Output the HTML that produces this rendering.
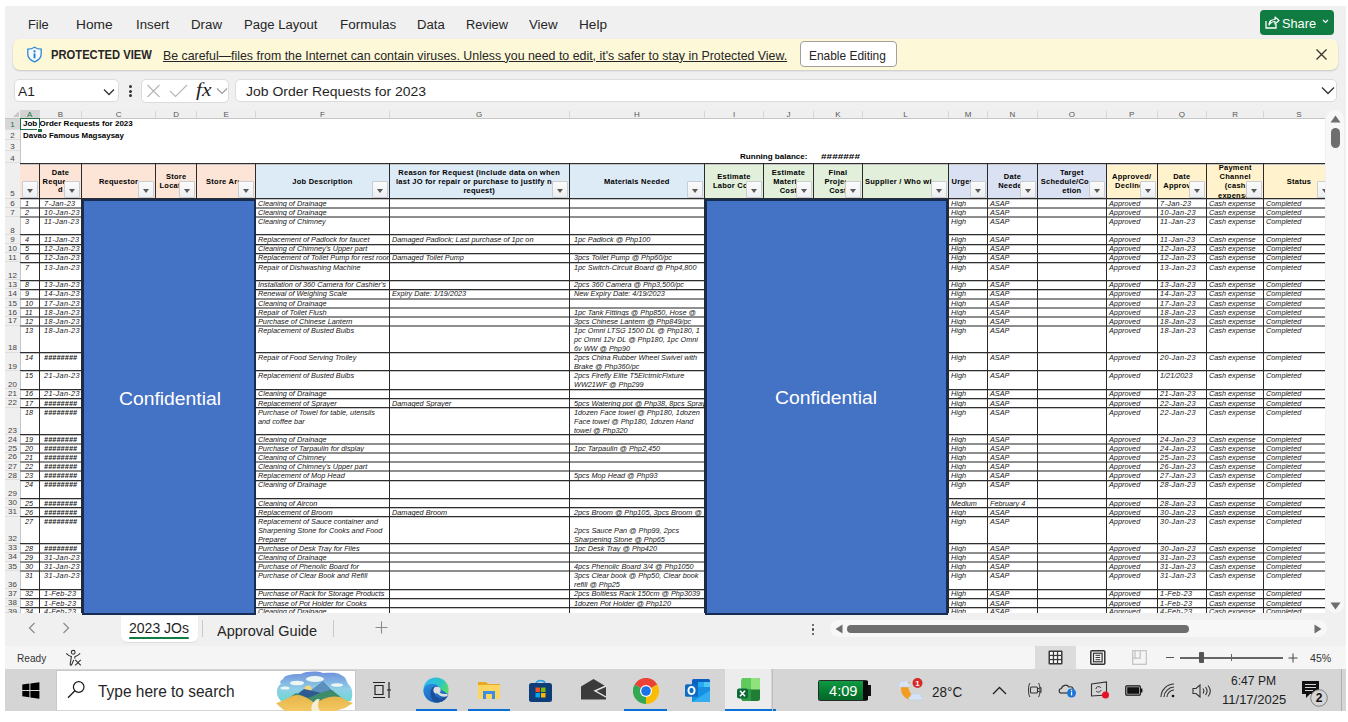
<!DOCTYPE html><html><head><meta charset="utf-8"><style>
*{margin:0;padding:0;box-sizing:border-box}
html,body{width:1348px;height:722px;overflow:hidden;background:#fff;font-family:"Liberation Sans",sans-serif;color:#1f1f1f}
.a{position:absolute}
.fb{position:absolute;width:16px;height:17px;background:linear-gradient(#fbfbfb,#eceef1);border:1px solid #c9ccd1;border-radius:1px}
.fb:after{content:"";position:absolute;left:4px;top:7px;border-left:3.5px solid transparent;border-right:3.5px solid transparent;border-top:4px solid #5a5a5a}
</style></head><body>
<div class="a" style="left:5px;top:6px;width:1341px;height:705px;background:#f0f0f0"></div>

<div style="position:absolute;left:27.5px;top:17.00px;line-height:normal;white-space:nowrap;font-size:13.7px;color:#262626;transform:scaleX(0.9382);transform-origin:0 0;">File</div>
<div style="position:absolute;left:76.4px;top:17.00px;line-height:normal;white-space:nowrap;font-size:13.7px;color:#262626;transform:scaleX(1.0023);transform-origin:0 0;">Home</div>
<div style="position:absolute;left:135.9px;top:17.00px;line-height:normal;white-space:nowrap;font-size:13.7px;color:#262626;transform:scaleX(0.9669);transform-origin:0 0;">Insert</div>
<div style="position:absolute;left:191px;top:17.00px;line-height:normal;white-space:nowrap;font-size:13.7px;color:#262626;transform:scaleX(0.9702);transform-origin:0 0;">Draw</div>
<div style="position:absolute;left:244px;top:17.00px;line-height:normal;white-space:nowrap;font-size:13.7px;color:#262626;transform:scaleX(0.9561);transform-origin:0 0;">Page Layout</div>
<div style="position:absolute;left:340.2px;top:17.00px;line-height:normal;white-space:nowrap;font-size:13.7px;color:#262626;transform:scaleX(0.9852);transform-origin:0 0;">Formulas</div>
<div style="position:absolute;left:416.9px;top:17.00px;line-height:normal;white-space:nowrap;font-size:13.7px;color:#262626;transform:scaleX(0.9578);transform-origin:0 0;">Data</div>
<div style="position:absolute;left:466px;top:17.00px;line-height:normal;white-space:nowrap;font-size:13.7px;color:#262626;transform:scaleX(0.9356);transform-origin:0 0;">Review</div>
<div style="position:absolute;left:529.4px;top:17.00px;line-height:normal;white-space:nowrap;font-size:13.7px;color:#262626;transform:scaleX(0.9687);transform-origin:0 0;">View</div>
<div style="position:absolute;left:579.2px;top:17.00px;line-height:normal;white-space:nowrap;font-size:13.7px;color:#262626;transform:scaleX(0.9945);transform-origin:0 0;">Help</div>
<div class="a" style="left:1260px;top:10px;width:73.5px;height:25px;background:#107c41;border-radius:4px"></div>
<svg class="a" style="left:1264px;top:15px" width="16" height="15" viewBox="0 0 16 15"><path d="M2 6 V13 H12 V9" fill="none" stroke="#fff" stroke-width="1.3"/><path d="M5 10 C5 6 8 4.5 11 4.5 V2 L15 5.5 L11 9 V6.5 C8.5 6.5 6.5 7.5 5 10Z" fill="none" stroke="#fff" stroke-width="1.2" stroke-linejoin="round"/></svg>
<div style="position:absolute;left:1282px;top:16.25px;line-height:normal;white-space:nowrap;font-size:13.2px;color:#fff;transform:scaleX(0.9658);transform-origin:0 0;">Share</div>
<svg class="a" style="left:1322px;top:19px" width="7" height="5" viewBox="0 0 7 5"><path d="M1 1 L3.5 3.5 L6 1" fill="none" stroke="#fff" stroke-width="1.2"/></svg>
<div class="a" style="left:12.5px;top:38.7px;width:1325px;height:31.5px;background:#fdf8d7;border-radius:7px;box-shadow:0 1px 2px rgba(0,0,0,0.18)"></div>
<svg class="a" style="left:26px;top:46px" width="17" height="17" viewBox="0 0 17 17"><path d="M8.5 1.2 C6 2.8 4 3.2 1.8 3.2 V8 C1.8 11.8 4.5 14.3 8.5 15.8 C12.5 14.3 15.2 11.8 15.2 8 V3.2 C13 3.2 11 2.8 8.5 1.2Z" fill="#f8f9fb" stroke="#2a8ad8" stroke-width="1.3"/><circle cx="8.5" cy="5.4" r="1.15" fill="#1a7fd0"/><path d="M8.5 7.4 V12.3" stroke="#1a7fd0" stroke-width="1.9"/></svg>
<div style="position:absolute;left:51.4px;top:47.37px;line-height:normal;white-space:nowrap;font-size:13.4px;font-weight:bold;color:#262626;transform:scaleX(0.8371);transform-origin:0 0;">PROTECTED VIEW</div>
<div style="position:absolute;left:162.8px;top:47.55px;line-height:normal;white-space:nowrap;font-size:13.2px;color:#262626;text-decoration:underline;transform:scaleX(0.9377);transform-origin:0 0;">Be careful—files from the Internet can contain viruses. Unless you need to edit, it&#x27;s safer to stay in Protected View.</div>
<div class="a" style="left:799.6px;top:40.8px;width:97.7px;height:26.7px;background:#fff;border:1px solid #a0a0a0;border-radius:4px"></div>
<div style="position:absolute;left:809px;top:47.55px;line-height:normal;white-space:nowrap;font-size:13.2px;color:#262626;transform:scaleX(0.9040);transform-origin:0 0;">Enable Editing</div>
<svg class="a" style="left:1315px;top:48px" width="13" height="13" viewBox="0 0 13 13"><path d="M1.5 1.5 L11.5 11.5 M11.5 1.5 L1.5 11.5" stroke="#333" stroke-width="1.3"/></svg>
<div class="a" style="left:14px;top:78.8px;width:105px;height:23.5px;background:#fff;border:1px solid #dcdcdc;border-radius:5px"></div>
<div style="position:absolute;left:17.8px;top:83.75px;line-height:normal;white-space:nowrap;font-size:13.2px;color:#1f1f1f;transform:scaleX(1.0470);transform-origin:0 0;">A1</div>
<svg class="a" style="left:103px;top:88px" width="12" height="8" viewBox="0 0 12 8"><path d="M1 1.5 L6 6.5 L11 1.5" fill="none" stroke="#333" stroke-width="1.3"/></svg>
<div class="a" style="left:128.5px;top:85px;width:3px;height:3px;border-radius:2px;background:#333"></div>
<div class="a" style="left:128.5px;top:89.5px;width:3px;height:3px;border-radius:2px;background:#333"></div>
<div class="a" style="left:128.5px;top:94px;width:3px;height:3px;border-radius:2px;background:#333"></div>
<div class="a" style="left:140.6px;top:78.8px;width:88.4px;height:24px;background:#fff;border:1px solid #dcdcdc;border-radius:5px"></div>
<svg class="a" style="left:146px;top:84px" width="15" height="14" viewBox="0 0 15 14"><path d="M1.5 1 L13.5 13 M13.5 1 L1.5 13" stroke="#b8b8b8" stroke-width="1.2"/></svg>
<svg class="a" style="left:169px;top:84px" width="19" height="14" viewBox="0 0 19 14"><path d="M1 7 L6.5 12.5 L18 1" fill="none" stroke="#b8b8b8" stroke-width="1.2"/></svg>
<div style="position:absolute;left:196px;top:80.01px;line-height:normal;white-space:nowrap;font-size:18px;font-family:Liberation Serif,serif;font-style:italic;color:#222;transform:scaleX(1.1923);transform-origin:0 0;">fx</div>
<svg class="a" style="left:216px;top:87px" width="12" height="8" viewBox="0 0 12 8"><path d="M1 1.5 L6 6.5 L11 1.5" fill="none" stroke="#999" stroke-width="1.1"/></svg>
<div class="a" style="left:234.7px;top:78.6px;width:1102.3px;height:23.5px;background:#fff;border:1px solid #dcdcdc;border-radius:5px"></div>
<div style="position:absolute;left:246px;top:83.68px;line-height:normal;white-space:nowrap;font-size:13.5px;color:#1f1f1f;transform:scaleX(1.0338);transform-origin:0 0;">Job Order Requests for 2023</div>
<svg class="a" style="left:1321px;top:86px" width="14" height="9" viewBox="0 0 14 9"><path d="M1 1.5 L7 7.5 L13 1.5" fill="none" stroke="#333" stroke-width="1.3"/></svg>
<div class="a" style="left:5px;top:109px;width:1320px;height:9.5px;background:#efefef"></div>
<div class="a" style="left:20px;top:118px;width:1304.5px;height:494.79999999999995px;background:#fff"></div>
<div class="a" style="left:5px;top:118px;width:15px;height:494.79999999999995px;background:#efefef"></div>
<div class="a" style="left:20px;top:109.5px;width:19.5px;height:9px;background:#d2d2d2;border-bottom:1px solid #217346"></div>
<div class="a" style="left:5px;top:118px;width:15px;height:11.5px;background:#d6d6d6"></div>
<svg class="a" style="left:13px;top:111px" width="6" height="6"><path d="M6 0 V6 H0Z" fill="#c8c8c8"/></svg>
<div class="a" style="left:39.0px;top:111px;width:1px;height:7px;background:#d6d6d6"></div>
<div class="a" style="left:20px;top:109.5px;width:19.5px;text-align:center;font-size:8px;line-height:9px;color:#217346">A</div>
<div class="a" style="left:81.0px;top:111px;width:1px;height:7px;background:#d6d6d6"></div>
<div class="a" style="left:39.5px;top:109.5px;width:42.0px;text-align:center;font-size:8px;line-height:9px;color:#555">B</div>
<div class="a" style="left:155.1px;top:111px;width:1px;height:7px;background:#d6d6d6"></div>
<div class="a" style="left:81.5px;top:109.5px;width:74.1px;text-align:center;font-size:8px;line-height:9px;color:#555">C</div>
<div class="a" style="left:196.2px;top:111px;width:1px;height:7px;background:#d6d6d6"></div>
<div class="a" style="left:155.6px;top:109.5px;width:41.1px;text-align:center;font-size:8px;line-height:9px;color:#555">D</div>
<div class="a" style="left:255.2px;top:111px;width:1px;height:7px;background:#d6d6d6"></div>
<div class="a" style="left:196.7px;top:109.5px;width:59.0px;text-align:center;font-size:8px;line-height:9px;color:#555">E</div>
<div class="a" style="left:388.7px;top:111px;width:1px;height:7px;background:#d6d6d6"></div>
<div class="a" style="left:255.7px;top:109.5px;width:133.5px;text-align:center;font-size:8px;line-height:9px;color:#555">F</div>
<div class="a" style="left:568.7px;top:111px;width:1px;height:7px;background:#d6d6d6"></div>
<div class="a" style="left:389.2px;top:109.5px;width:180.0px;text-align:center;font-size:8px;line-height:9px;color:#555">G</div>
<div class="a" style="left:704.0px;top:111px;width:1px;height:7px;background:#d6d6d6"></div>
<div class="a" style="left:569.2px;top:109.5px;width:135.3px;text-align:center;font-size:8px;line-height:9px;color:#555">H</div>
<div class="a" style="left:763.0px;top:111px;width:1px;height:7px;background:#d6d6d6"></div>
<div class="a" style="left:704.5px;top:109.5px;width:59.0px;text-align:center;font-size:8px;line-height:9px;color:#555">I</div>
<div class="a" style="left:813.0px;top:111px;width:1px;height:7px;background:#d6d6d6"></div>
<div class="a" style="left:763.5px;top:109.5px;width:50.0px;text-align:center;font-size:8px;line-height:9px;color:#555">J</div>
<div class="a" style="left:862.0px;top:111px;width:1px;height:7px;background:#d6d6d6"></div>
<div class="a" style="left:813.5px;top:109.5px;width:49.0px;text-align:center;font-size:8px;line-height:9px;color:#555">K</div>
<div class="a" style="left:948.1px;top:111px;width:1px;height:7px;background:#d6d6d6"></div>
<div class="a" style="left:862.5px;top:109.5px;width:86.1px;text-align:center;font-size:8px;line-height:9px;color:#555">L</div>
<div class="a" style="left:987.1px;top:111px;width:1px;height:7px;background:#d6d6d6"></div>
<div class="a" style="left:948.6px;top:109.5px;width:39.0px;text-align:center;font-size:8px;line-height:9px;color:#555">M</div>
<div class="a" style="left:1036.8px;top:111px;width:1px;height:7px;background:#d6d6d6"></div>
<div class="a" style="left:987.6px;top:109.5px;width:49.7px;text-align:center;font-size:8px;line-height:9px;color:#555">N</div>
<div class="a" style="left:1105.9px;top:111px;width:1px;height:7px;background:#d6d6d6"></div>
<div class="a" style="left:1037.3px;top:109.5px;width:69.1px;text-align:center;font-size:8px;line-height:9px;color:#555">O</div>
<div class="a" style="left:1156.5px;top:111px;width:1px;height:7px;background:#d6d6d6"></div>
<div class="a" style="left:1106.4px;top:109.5px;width:50.6px;text-align:center;font-size:8px;line-height:9px;color:#555">P</div>
<div class="a" style="left:1206.1px;top:111px;width:1px;height:7px;background:#d6d6d6"></div>
<div class="a" style="left:1157px;top:109.5px;width:49.6px;text-align:center;font-size:8px;line-height:9px;color:#555">Q</div>
<div class="a" style="left:1263.4px;top:111px;width:1px;height:7px;background:#d6d6d6"></div>
<div class="a" style="left:1206.6px;top:109.5px;width:57.3px;text-align:center;font-size:8px;line-height:9px;color:#555">R</div>
<div class="a" style="left:1333.5px;top:111px;width:1px;height:7px;background:#d6d6d6"></div>
<div class="a" style="left:1263.9px;top:109.5px;width:70.1px;text-align:center;font-size:8px;line-height:9px;color:#555">S</div>
<div class="a" style="left:5px;top:118px;width:1320px;height:1px;background:#c6c6c6"></div>
<div class="a" style="left:5px;top:128.5px;width:15px;height:1px;background:#dedede"></div>
<div class="a" style="left:5px;top:120.0px;width:15px;text-align:center;font-size:8px;line-height:9px;color:#217346">1</div>
<div class="a" style="left:5px;top:139.3px;width:15px;height:1px;background:#dedede"></div>
<div class="a" style="left:5px;top:130.8px;width:15px;text-align:center;font-size:8px;line-height:9px;color:#444">2</div>
<div class="a" style="left:5px;top:150.2px;width:15px;height:1px;background:#dedede"></div>
<div class="a" style="left:5px;top:141.7px;width:15px;text-align:center;font-size:8px;line-height:9px;color:#444">3</div>
<div class="a" style="left:5px;top:162.3px;width:15px;height:1px;background:#dedede"></div>
<div class="a" style="left:5px;top:153.8px;width:15px;text-align:center;font-size:8px;line-height:9px;color:#444">4</div>
<div class="a" style="left:5px;top:197.6px;width:15px;height:1px;background:#dedede"></div>
<div class="a" style="left:5px;top:189.1px;width:15px;text-align:center;font-size:8px;line-height:9px;color:#444">5</div>
<div class="a" style="left:5px;top:207.0px;width:15px;height:1px;background:#dedede"></div>
<div class="a" style="left:5px;top:198.5px;width:15px;text-align:center;font-size:8px;line-height:9px;color:#444">6</div>
<div class="a" style="left:5px;top:216.1px;width:15px;height:1px;background:#dedede"></div>
<div class="a" style="left:5px;top:207.6px;width:15px;text-align:center;font-size:8px;line-height:9px;color:#444">7</div>
<div class="a" style="left:5px;top:234.0px;width:15px;height:1px;background:#dedede"></div>
<div class="a" style="left:5px;top:225.5px;width:15px;text-align:center;font-size:8px;line-height:9px;color:#444">8</div>
<div class="a" style="left:5px;top:243.0px;width:15px;height:1px;background:#dedede"></div>
<div class="a" style="left:5px;top:234.5px;width:15px;text-align:center;font-size:8px;line-height:9px;color:#444">9</div>
<div class="a" style="left:5px;top:252.2px;width:15px;height:1px;background:#dedede"></div>
<div class="a" style="left:5px;top:243.7px;width:15px;text-align:center;font-size:8px;line-height:9px;color:#444">10</div>
<div class="a" style="left:5px;top:261.4px;width:15px;height:1px;background:#dedede"></div>
<div class="a" style="left:5px;top:252.9px;width:15px;text-align:center;font-size:8px;line-height:9px;color:#444">11</div>
<div class="a" style="left:5px;top:279.2px;width:15px;height:1px;background:#dedede"></div>
<div class="a" style="left:5px;top:270.7px;width:15px;text-align:center;font-size:8px;line-height:9px;color:#444">12</div>
<div class="a" style="left:5px;top:288.3px;width:15px;height:1px;background:#dedede"></div>
<div class="a" style="left:5px;top:279.8px;width:15px;text-align:center;font-size:8px;line-height:9px;color:#444">13</div>
<div class="a" style="left:5px;top:297.8px;width:15px;height:1px;background:#dedede"></div>
<div class="a" style="left:5px;top:289.3px;width:15px;text-align:center;font-size:8px;line-height:9px;color:#444">14</div>
<div class="a" style="left:5px;top:307.0px;width:15px;height:1px;background:#dedede"></div>
<div class="a" style="left:5px;top:298.5px;width:15px;text-align:center;font-size:8px;line-height:9px;color:#444">15</div>
<div class="a" style="left:5px;top:316.1px;width:15px;height:1px;background:#dedede"></div>
<div class="a" style="left:5px;top:307.6px;width:15px;text-align:center;font-size:8px;line-height:9px;color:#444">16</div>
<div class="a" style="left:5px;top:324.8px;width:15px;height:1px;background:#dedede"></div>
<div class="a" style="left:5px;top:316.3px;width:15px;text-align:center;font-size:8px;line-height:9px;color:#444">17</div>
<div class="a" style="left:5px;top:351.8px;width:15px;height:1px;background:#dedede"></div>
<div class="a" style="left:5px;top:343.3px;width:15px;text-align:center;font-size:8px;line-height:9px;color:#444">18</div>
<div class="a" style="left:5px;top:370.0px;width:15px;height:1px;background:#dedede"></div>
<div class="a" style="left:5px;top:361.5px;width:15px;text-align:center;font-size:8px;line-height:9px;color:#444">19</div>
<div class="a" style="left:5px;top:388.3px;width:15px;height:1px;background:#dedede"></div>
<div class="a" style="left:5px;top:379.8px;width:15px;text-align:center;font-size:8px;line-height:9px;color:#444">20</div>
<div class="a" style="left:5px;top:397.8px;width:15px;height:1px;background:#dedede"></div>
<div class="a" style="left:5px;top:389.3px;width:15px;text-align:center;font-size:8px;line-height:9px;color:#444">21</div>
<div class="a" style="left:5px;top:406.5px;width:15px;height:1px;background:#dedede"></div>
<div class="a" style="left:5px;top:398.0px;width:15px;text-align:center;font-size:8px;line-height:9px;color:#444">22</div>
<div class="a" style="left:5px;top:434.0px;width:15px;height:1px;background:#dedede"></div>
<div class="a" style="left:5px;top:425.5px;width:15px;text-align:center;font-size:8px;line-height:9px;color:#444">23</div>
<div class="a" style="left:5px;top:443.0px;width:15px;height:1px;background:#dedede"></div>
<div class="a" style="left:5px;top:434.5px;width:15px;text-align:center;font-size:8px;line-height:9px;color:#444">24</div>
<div class="a" style="left:5px;top:452.2px;width:15px;height:1px;background:#dedede"></div>
<div class="a" style="left:5px;top:443.7px;width:15px;text-align:center;font-size:8px;line-height:9px;color:#444">25</div>
<div class="a" style="left:5px;top:460.9px;width:15px;height:1px;background:#dedede"></div>
<div class="a" style="left:5px;top:452.4px;width:15px;text-align:center;font-size:8px;line-height:9px;color:#444">26</div>
<div class="a" style="left:5px;top:470.0px;width:15px;height:1px;background:#dedede"></div>
<div class="a" style="left:5px;top:461.5px;width:15px;text-align:center;font-size:8px;line-height:9px;color:#444">27</div>
<div class="a" style="left:5px;top:479.2px;width:15px;height:1px;background:#dedede"></div>
<div class="a" style="left:5px;top:470.7px;width:15px;text-align:center;font-size:8px;line-height:9px;color:#444">28</div>
<div class="a" style="left:5px;top:497.8px;width:15px;height:1px;background:#dedede"></div>
<div class="a" style="left:5px;top:489.3px;width:15px;text-align:center;font-size:8px;line-height:9px;color:#444">29</div>
<div class="a" style="left:5px;top:506.5px;width:15px;height:1px;background:#dedede"></div>
<div class="a" style="left:5px;top:498.0px;width:15px;text-align:center;font-size:8px;line-height:9px;color:#444">30</div>
<div class="a" style="left:5px;top:515.7px;width:15px;height:1px;background:#dedede"></div>
<div class="a" style="left:5px;top:507.2px;width:15px;text-align:center;font-size:8px;line-height:9px;color:#444">31</div>
<div class="a" style="left:5px;top:542.6px;width:15px;height:1px;background:#dedede"></div>
<div class="a" style="left:5px;top:534.1px;width:15px;text-align:center;font-size:8px;line-height:9px;color:#444">32</div>
<div class="a" style="left:5px;top:551.8px;width:15px;height:1px;background:#dedede"></div>
<div class="a" style="left:5px;top:543.3px;width:15px;text-align:center;font-size:8px;line-height:9px;color:#444">33</div>
<div class="a" style="left:5px;top:560.9px;width:15px;height:1px;background:#dedede"></div>
<div class="a" style="left:5px;top:552.4px;width:15px;text-align:center;font-size:8px;line-height:9px;color:#444">34</div>
<div class="a" style="left:5px;top:570.0px;width:15px;height:1px;background:#dedede"></div>
<div class="a" style="left:5px;top:561.5px;width:15px;text-align:center;font-size:8px;line-height:9px;color:#444">35</div>
<div class="a" style="left:5px;top:588.3px;width:15px;height:1px;background:#dedede"></div>
<div class="a" style="left:5px;top:579.8px;width:15px;text-align:center;font-size:8px;line-height:9px;color:#444">36</div>
<div class="a" style="left:5px;top:597.5px;width:15px;height:1px;background:#dedede"></div>
<div class="a" style="left:5px;top:589.0px;width:15px;text-align:center;font-size:8px;line-height:9px;color:#444">37</div>
<div class="a" style="left:5px;top:606.2px;width:15px;height:1px;background:#dedede"></div>
<div class="a" style="left:5px;top:597.7px;width:15px;text-align:center;font-size:8px;line-height:9px;color:#444">38</div>
<div class="a" style="left:5px;top:611.8px;width:15px;height:1px;background:#dedede"></div>
<div class="a" style="left:5px;top:607.2px;width:15px;height:5.6px;overflow:hidden"><div style="text-align:center;font-size:8px;line-height:9px;color:#444">39</div></div>
<div class="a" style="left:19.5px;top:118px;width:1px;height:494.79999999999995px;background:#c6c6c6"></div>
<div class="a" style="left:0;top:0;width:1324.5px;height:612.8px;overflow:hidden">
<div style="position:absolute;left:23px;top:119.48px;line-height:normal;white-space:nowrap;font-size:7.2px;font-weight:bold;color:#000;transform:scaleX(1.1174);transform-origin:0 0;">Job Order Requests for 2023</div>
<div style="position:absolute;left:23px;top:130.58px;line-height:normal;white-space:nowrap;font-size:7.2px;font-weight:bold;color:#000;transform:scaleX(1.1029);transform-origin:0 0;">Davao Famous Magsaysay</div>
<div style="position:absolute;left:740px;top:152.28px;line-height:normal;white-space:nowrap;font-size:7.2px;font-weight:bold;color:#000;transform:scaleX(1.1192);transform-origin:0 0;">Running balance:</div>
<div style="position:absolute;left:821.3px;top:152.28px;line-height:normal;white-space:nowrap;font-size:7.2px;font-weight:bold;color:#000;transform:scaleX(1.3936);transform-origin:0 0;">#######</div>
<div class="a" style="left:20px;top:163.3px;width:19.5px;height:35.3px;background:#fce4d6"></div>
<div class="a" style="left:39.5px;top:163.3px;width:42.0px;height:35.3px;background:#fce4d6"></div>
<div class="a" style="left:81.5px;top:163.3px;width:74.1px;height:35.3px;background:#fce4d6"></div>
<div class="a" style="left:155.6px;top:163.3px;width:41.1px;height:35.3px;background:#fce4d6"></div>
<div class="a" style="left:196.7px;top:163.3px;width:59.0px;height:35.3px;background:#fce4d6"></div>
<div class="a" style="left:255.7px;top:163.3px;width:133.5px;height:35.3px;background:#ddebf7"></div>
<div class="a" style="left:389.2px;top:163.3px;width:180.0px;height:35.3px;background:#ddebf7"></div>
<div class="a" style="left:569.2px;top:163.3px;width:135.3px;height:35.3px;background:#ddebf7"></div>
<div class="a" style="left:704.5px;top:163.3px;width:59.0px;height:35.3px;background:#e2efda"></div>
<div class="a" style="left:763.5px;top:163.3px;width:50.0px;height:35.3px;background:#e2efda"></div>
<div class="a" style="left:813.5px;top:163.3px;width:49.0px;height:35.3px;background:#e2efda"></div>
<div class="a" style="left:862.5px;top:163.3px;width:86.1px;height:35.3px;background:#e2efda"></div>
<div class="a" style="left:948.6px;top:163.3px;width:39.0px;height:35.3px;background:#d9e1f2"></div>
<div class="a" style="left:987.6px;top:163.3px;width:49.7px;height:35.3px;background:#d9e1f2"></div>
<div class="a" style="left:1037.3px;top:163.3px;width:69.1px;height:35.3px;background:#d9e1f2"></div>
<div class="a" style="left:1106.4px;top:163.3px;width:50.6px;height:35.3px;background:#fff2cc"></div>
<div class="a" style="left:1157px;top:163.3px;width:49.6px;height:35.3px;background:#fff2cc"></div>
<div class="a" style="left:1206.6px;top:163.3px;width:57.3px;height:35.3px;background:#fff2cc"></div>
<div class="a" style="left:1263.9px;top:163.3px;width:70.1px;height:35.3px;background:#fff2cc"></div>
<div class="a" style="left:20.0px;top:177.0px;width:2.5px;overflow:hidden;height:9px"><div style="position:absolute;left:-40px;width:99.5px;text-align:center;font-weight:bold;font-size:7.5px;letter-spacing:0.25px;line-height:9px;white-space:nowrap;color:#000">No.</div></div>
<div class="a" style="left:39.5px;top:167.8px;width:42.0px;overflow:hidden;height:9px"><div style="position:absolute;left:-40px;width:122.0px;text-align:center;font-weight:bold;font-size:7.5px;letter-spacing:0.25px;line-height:9px;white-space:nowrap;color:#000">Date</div></div>
<div class="a" style="left:39.5px;top:176.7px;width:25.0px;overflow:hidden;height:9px"><div style="position:absolute;left:-40px;width:122.0px;text-align:center;font-weight:bold;font-size:7.5px;letter-spacing:0.25px;line-height:9px;white-space:nowrap;color:#000">Requeste</div></div>
<div class="a" style="left:39.5px;top:185.4px;width:25.0px;overflow:hidden;height:9px"><div style="position:absolute;left:-40px;width:122.0px;text-align:center;font-weight:bold;font-size:7.5px;letter-spacing:0.25px;line-height:9px;white-space:nowrap;color:#000">d</div></div>
<div class="a" style="left:81.5px;top:176.7px;width:57.1px;overflow:hidden;height:9px"><div style="position:absolute;left:-40px;width:154.1px;text-align:center;font-weight:bold;font-size:7.5px;letter-spacing:0.25px;line-height:9px;white-space:nowrap;color:#000">Requestor</div></div>
<div class="a" style="left:155.6px;top:171.7px;width:41.1px;overflow:hidden;height:9px"><div style="position:absolute;left:-40px;width:121.1px;text-align:center;font-weight:bold;font-size:7.5px;letter-spacing:0.25px;line-height:9px;white-space:nowrap;color:#000">Store</div></div>
<div class="a" style="left:155.6px;top:180.9px;width:24.1px;overflow:hidden;height:9px"><div style="position:absolute;left:-40px;width:121.1px;text-align:center;font-weight:bold;font-size:7.5px;letter-spacing:0.25px;line-height:9px;white-space:nowrap;color:#000">Location</div></div>
<div class="a" style="left:196.7px;top:176.7px;width:42.0px;overflow:hidden;height:9px"><div style="position:absolute;left:-40px;width:139.0px;text-align:center;font-weight:bold;font-size:7.5px;letter-spacing:0.25px;line-height:9px;white-space:nowrap;color:#000">Store Area</div></div>
<div class="a" style="left:255.7px;top:176.8px;width:116.5px;overflow:hidden;height:9px"><div style="position:absolute;left:-40px;width:213.5px;text-align:center;font-weight:bold;font-size:7.5px;letter-spacing:0.25px;line-height:9px;white-space:nowrap;color:#000">Job Description</div></div>
<div class="a" style="left:389.2px;top:167.7px;width:180.0px;overflow:hidden;height:9px"><div style="position:absolute;left:-40px;width:260.0px;text-align:center;font-weight:bold;font-size:7.5px;letter-spacing:0.25px;line-height:9px;white-space:nowrap;color:#000">Reason for Request (include data on when</div></div>
<div class="a" style="left:389.2px;top:177.0px;width:163.0px;overflow:hidden;height:9px"><div style="position:absolute;left:-40px;width:260.0px;text-align:center;font-weight:bold;font-size:7.5px;letter-spacing:0.25px;line-height:9px;white-space:nowrap;color:#000">last JO for repair or purchase to justify new</div></div>
<div class="a" style="left:389.2px;top:186.1px;width:163.0px;overflow:hidden;height:9px"><div style="position:absolute;left:-40px;width:260.0px;text-align:center;font-weight:bold;font-size:7.5px;letter-spacing:0.25px;line-height:9px;white-space:nowrap;color:#000">request)</div></div>
<div class="a" style="left:569.2px;top:176.8px;width:118.3px;overflow:hidden;height:9px"><div style="position:absolute;left:-40px;width:215.3px;text-align:center;font-weight:bold;font-size:7.5px;letter-spacing:0.25px;line-height:9px;white-space:nowrap;color:#000">Materials Needed</div></div>
<div class="a" style="left:704.5px;top:171.7px;width:59.0px;overflow:hidden;height:9px"><div style="position:absolute;left:-40px;width:139.0px;text-align:center;font-weight:bold;font-size:7.5px;letter-spacing:0.25px;line-height:9px;white-space:nowrap;color:#000">Estimate</div></div>
<div class="a" style="left:704.5px;top:180.7px;width:42.0px;overflow:hidden;height:9px"><div style="position:absolute;left:-40px;width:139.0px;text-align:center;font-weight:bold;font-size:7.5px;letter-spacing:0.25px;line-height:9px;white-space:nowrap;color:#000">Labor Cost</div></div>
<div class="a" style="left:763.5px;top:167.7px;width:50.0px;overflow:hidden;height:9px"><div style="position:absolute;left:-40px;width:130.0px;text-align:center;font-weight:bold;font-size:7.5px;letter-spacing:0.25px;line-height:9px;white-space:nowrap;color:#000">Estimate</div></div>
<div class="a" style="left:763.5px;top:176.8px;width:33.0px;overflow:hidden;height:9px"><div style="position:absolute;left:-40px;width:130.0px;text-align:center;font-weight:bold;font-size:7.5px;letter-spacing:0.25px;line-height:9px;white-space:nowrap;color:#000">Material</div></div>
<div class="a" style="left:763.5px;top:185.5px;width:33.0px;overflow:hidden;height:9px"><div style="position:absolute;left:-40px;width:130.0px;text-align:center;font-weight:bold;font-size:7.5px;letter-spacing:0.25px;line-height:9px;white-space:nowrap;color:#000">Cost</div></div>
<div class="a" style="left:813.5px;top:167.7px;width:49.0px;overflow:hidden;height:9px"><div style="position:absolute;left:-40px;width:129.0px;text-align:center;font-weight:bold;font-size:7.5px;letter-spacing:0.25px;line-height:9px;white-space:nowrap;color:#000">Final</div></div>
<div class="a" style="left:813.5px;top:176.8px;width:32.0px;overflow:hidden;height:9px"><div style="position:absolute;left:-40px;width:129.0px;text-align:center;font-weight:bold;font-size:7.5px;letter-spacing:0.25px;line-height:9px;white-space:nowrap;color:#000">Project</div></div>
<div class="a" style="left:813.5px;top:185.5px;width:32.0px;overflow:hidden;height:9px"><div style="position:absolute;left:-40px;width:129.0px;text-align:center;font-weight:bold;font-size:7.5px;letter-spacing:0.25px;line-height:9px;white-space:nowrap;color:#000">Cost</div></div>
<div class="a" style="left:862.5px;top:177.1px;width:69.1px;overflow:hidden;height:9px"><div style="position:absolute;left:2.5px;font-weight:bold;font-size:7.5px;letter-spacing:0.25px;line-height:9px;white-space:nowrap;color:#000">Supplier / Who will do</div></div>
<div class="a" style="left:948.6px;top:177.1px;width:22.0px;overflow:hidden;height:9px"><div style="position:absolute;left:2.9px;font-weight:bold;font-size:7.5px;letter-spacing:0.25px;line-height:9px;white-space:nowrap;color:#000">Urgency</div></div>
<div class="a" style="left:987.6px;top:171.8px;width:49.7px;overflow:hidden;height:9px"><div style="position:absolute;left:-40px;width:129.7px;text-align:center;font-weight:bold;font-size:7.5px;letter-spacing:0.25px;line-height:9px;white-space:nowrap;color:#000">Date</div></div>
<div class="a" style="left:987.6px;top:180.9px;width:32.7px;overflow:hidden;height:9px"><div style="position:absolute;left:-40px;width:129.7px;text-align:center;font-weight:bold;font-size:7.5px;letter-spacing:0.25px;line-height:9px;white-space:nowrap;color:#000">Needed</div></div>
<div class="a" style="left:1037.3px;top:167.9px;width:69.1px;overflow:hidden;height:9px"><div style="position:absolute;left:-40px;width:149.1px;text-align:center;font-weight:bold;font-size:7.5px;letter-spacing:0.25px;line-height:9px;white-space:nowrap;color:#000">Target</div></div>
<div class="a" style="left:1037.3px;top:176.8px;width:52.1px;overflow:hidden;height:9px"><div style="position:absolute;left:-40px;width:149.1px;text-align:center;font-weight:bold;font-size:7.5px;letter-spacing:0.25px;line-height:9px;white-space:nowrap;color:#000">Schedule/Compl</div></div>
<div class="a" style="left:1037.3px;top:186.2px;width:52.1px;overflow:hidden;height:9px"><div style="position:absolute;left:-40px;width:149.1px;text-align:center;font-weight:bold;font-size:7.5px;letter-spacing:0.25px;line-height:9px;white-space:nowrap;color:#000">etion</div></div>
<div class="a" style="left:1106.4px;top:171.8px;width:50.6px;overflow:hidden;height:9px"><div style="position:absolute;left:-40px;width:130.6px;text-align:center;font-weight:bold;font-size:7.5px;letter-spacing:0.25px;line-height:9px;white-space:nowrap;color:#000">Approved/</div></div>
<div class="a" style="left:1106.4px;top:180.9px;width:33.6px;overflow:hidden;height:9px"><div style="position:absolute;left:-40px;width:130.6px;text-align:center;font-weight:bold;font-size:7.5px;letter-spacing:0.25px;line-height:9px;white-space:nowrap;color:#000">Declined</div></div>
<div class="a" style="left:1157.0px;top:171.8px;width:49.6px;overflow:hidden;height:9px"><div style="position:absolute;left:-40px;width:129.6px;text-align:center;font-weight:bold;font-size:7.5px;letter-spacing:0.25px;line-height:9px;white-space:nowrap;color:#000">Date</div></div>
<div class="a" style="left:1157.0px;top:180.9px;width:32.6px;overflow:hidden;height:9px"><div style="position:absolute;left:-40px;width:129.6px;text-align:center;font-weight:bold;font-size:7.5px;letter-spacing:0.25px;line-height:9px;white-space:nowrap;color:#000">Approved</div></div>
<div class="a" style="left:1206.6px;top:163.3px;width:57.3px;overflow:hidden;height:9px"><div style="position:absolute;left:-40px;width:137.3px;text-align:center;font-weight:bold;font-size:7.5px;letter-spacing:0.25px;line-height:9px;white-space:nowrap;color:#000">Payment</div></div>
<div class="a" style="left:1206.6px;top:172.2px;width:57.3px;overflow:hidden;height:9px"><div style="position:absolute;left:-40px;width:137.3px;text-align:center;font-weight:bold;font-size:7.5px;letter-spacing:0.25px;line-height:9px;white-space:nowrap;color:#000">Channel</div></div>
<div class="a" style="left:1206.6px;top:181.4px;width:40.3px;overflow:hidden;height:9px"><div style="position:absolute;left:-40px;width:137.3px;text-align:center;font-weight:bold;font-size:7.5px;letter-spacing:0.25px;line-height:9px;white-space:nowrap;color:#000">(cash</div></div>
<div class="a" style="left:1206.6px;top:190.5px;width:40.3px;overflow:hidden;height:9px"><div style="position:absolute;left:-40px;width:137.3px;text-align:center;font-weight:bold;font-size:7.5px;letter-spacing:0.25px;line-height:9px;white-space:nowrap;color:#000">expense)</div></div>
<div class="a" style="left:1263.9px;top:176.8px;width:53.1px;overflow:hidden;height:9px"><div style="position:absolute;left:-40px;width:150.1px;text-align:center;font-weight:bold;font-size:7.5px;letter-spacing:0.25px;line-height:9px;white-space:nowrap;color:#000">Status</div></div>
<div class="a" style="left:20.0px;top:198.6px;width:19.5px;height:9.4px;overflow:hidden"><div class="a" style="left:4.5px;top:1.2px;font-style:italic;font-size:7.6px;line-height:8px;white-space:nowrap;color:#151515;transform:scaleX(0.96);transform-origin:0 0">1</div></div>
<div class="a" style="left:39.5px;top:198.6px;width:42.0px;height:9.4px;overflow:hidden"><div class="a" style="left:4.0px;top:1.2px;font-style:italic;font-size:7.6px;line-height:8px;white-space:nowrap;color:#151515;transform:scaleX(0.96);transform-origin:0 0;letter-spacing:0.35px">7-Jan-23</div></div>
<div class="a" style="left:255.7px;top:198.6px;width:133.5px;height:9.4px;overflow:hidden"><div class="a" style="left:2.8px;top:1.2px;font-style:italic;font-size:7.6px;line-height:8px;white-space:nowrap;color:#151515;transform:scaleX(0.96);transform-origin:0 0">Cleaning of Drainage</div></div>
<div class="a" style="left:948.6px;top:198.6px;width:39.0px;height:9.4px;overflow:hidden"><div class="a" style="left:2.4px;top:1.2px;font-style:italic;font-size:7.6px;line-height:8px;white-space:nowrap;color:#151515;transform:scaleX(0.96);transform-origin:0 0">High</div></div>
<div class="a" style="left:987.6px;top:198.6px;width:49.7px;height:9.4px;overflow:hidden"><div class="a" style="left:2.9px;top:1.2px;font-style:italic;font-size:7.6px;line-height:8px;white-space:nowrap;color:#151515;transform:scaleX(0.96);transform-origin:0 0">ASAP</div></div>
<div class="a" style="left:1106.4px;top:198.6px;width:50.6px;height:9.4px;overflow:hidden"><div class="a" style="left:2.6px;top:1.2px;font-style:italic;font-size:7.6px;line-height:8px;white-space:nowrap;color:#151515;transform:scaleX(0.96);transform-origin:0 0">Approved</div></div>
<div class="a" style="left:1157.0px;top:198.6px;width:49.6px;height:9.4px;overflow:hidden"><div class="a" style="left:3.0px;top:1.2px;font-style:italic;font-size:7.6px;line-height:8px;white-space:nowrap;color:#151515;transform:scaleX(0.96);transform-origin:0 0;letter-spacing:0.35px">7-Jan-23</div></div>
<div class="a" style="left:1206.6px;top:198.6px;width:57.3px;height:9.4px;overflow:hidden"><div class="a" style="left:2.9px;top:1.2px;font-style:italic;font-size:7.6px;line-height:8px;white-space:nowrap;color:#151515;transform:scaleX(0.96);transform-origin:0 0">Cash expense</div></div>
<div class="a" style="left:1263.9px;top:198.6px;width:70.1px;height:9.4px;overflow:hidden"><div class="a" style="left:2.6px;top:1.2px;font-style:italic;font-size:7.6px;line-height:8px;white-space:nowrap;color:#151515;transform:scaleX(0.96);transform-origin:0 0">Completed</div></div>
<div class="a" style="left:20.0px;top:208.0px;width:19.5px;height:9.1px;overflow:hidden"><div class="a" style="left:4.5px;top:1.2px;font-style:italic;font-size:7.6px;line-height:8px;white-space:nowrap;color:#151515;transform:scaleX(0.96);transform-origin:0 0">2</div></div>
<div class="a" style="left:39.5px;top:208.0px;width:42.0px;height:9.1px;overflow:hidden"><div class="a" style="left:4.0px;top:1.2px;font-style:italic;font-size:7.6px;line-height:8px;white-space:nowrap;color:#151515;transform:scaleX(0.96);transform-origin:0 0;letter-spacing:0.35px">10-Jan-23</div></div>
<div class="a" style="left:255.7px;top:208.0px;width:133.5px;height:9.1px;overflow:hidden"><div class="a" style="left:2.8px;top:1.2px;font-style:italic;font-size:7.6px;line-height:8px;white-space:nowrap;color:#151515;transform:scaleX(0.96);transform-origin:0 0">Cleaning of Drainage</div></div>
<div class="a" style="left:948.6px;top:208.0px;width:39.0px;height:9.1px;overflow:hidden"><div class="a" style="left:2.4px;top:1.2px;font-style:italic;font-size:7.6px;line-height:8px;white-space:nowrap;color:#151515;transform:scaleX(0.96);transform-origin:0 0">High</div></div>
<div class="a" style="left:987.6px;top:208.0px;width:49.7px;height:9.1px;overflow:hidden"><div class="a" style="left:2.9px;top:1.2px;font-style:italic;font-size:7.6px;line-height:8px;white-space:nowrap;color:#151515;transform:scaleX(0.96);transform-origin:0 0">ASAP</div></div>
<div class="a" style="left:1106.4px;top:208.0px;width:50.6px;height:9.1px;overflow:hidden"><div class="a" style="left:2.6px;top:1.2px;font-style:italic;font-size:7.6px;line-height:8px;white-space:nowrap;color:#151515;transform:scaleX(0.96);transform-origin:0 0">Approved</div></div>
<div class="a" style="left:1157.0px;top:208.0px;width:49.6px;height:9.1px;overflow:hidden"><div class="a" style="left:3.0px;top:1.2px;font-style:italic;font-size:7.6px;line-height:8px;white-space:nowrap;color:#151515;transform:scaleX(0.96);transform-origin:0 0;letter-spacing:0.35px">10-Jan-23</div></div>
<div class="a" style="left:1206.6px;top:208.0px;width:57.3px;height:9.1px;overflow:hidden"><div class="a" style="left:2.9px;top:1.2px;font-style:italic;font-size:7.6px;line-height:8px;white-space:nowrap;color:#151515;transform:scaleX(0.96);transform-origin:0 0">Cash expense</div></div>
<div class="a" style="left:1263.9px;top:208.0px;width:70.1px;height:9.1px;overflow:hidden"><div class="a" style="left:2.6px;top:1.2px;font-style:italic;font-size:7.6px;line-height:8px;white-space:nowrap;color:#151515;transform:scaleX(0.96);transform-origin:0 0">Completed</div></div>
<div class="a" style="left:20.0px;top:217.1px;width:19.5px;height:17.9px;overflow:hidden"><div class="a" style="left:4.5px;top:1.2px;font-style:italic;font-size:7.6px;line-height:8px;white-space:nowrap;color:#151515;transform:scaleX(0.96);transform-origin:0 0">3</div></div>
<div class="a" style="left:39.5px;top:217.1px;width:42.0px;height:17.9px;overflow:hidden"><div class="a" style="left:4.0px;top:1.2px;font-style:italic;font-size:7.6px;line-height:8px;white-space:nowrap;color:#151515;transform:scaleX(0.96);transform-origin:0 0;letter-spacing:0.35px">11-Jan-23</div></div>
<div class="a" style="left:255.7px;top:217.1px;width:133.5px;height:17.9px;overflow:hidden"><div class="a" style="left:2.8px;top:1.2px;font-style:italic;font-size:7.6px;line-height:8px;white-space:nowrap;color:#151515;transform:scaleX(0.96);transform-origin:0 0">Cleaning of Chimney</div></div>
<div class="a" style="left:948.6px;top:217.1px;width:39.0px;height:17.9px;overflow:hidden"><div class="a" style="left:2.4px;top:1.2px;font-style:italic;font-size:7.6px;line-height:8px;white-space:nowrap;color:#151515;transform:scaleX(0.96);transform-origin:0 0">High</div></div>
<div class="a" style="left:987.6px;top:217.1px;width:49.7px;height:17.9px;overflow:hidden"><div class="a" style="left:2.9px;top:1.2px;font-style:italic;font-size:7.6px;line-height:8px;white-space:nowrap;color:#151515;transform:scaleX(0.96);transform-origin:0 0">ASAP</div></div>
<div class="a" style="left:1106.4px;top:217.1px;width:50.6px;height:17.9px;overflow:hidden"><div class="a" style="left:2.6px;top:1.2px;font-style:italic;font-size:7.6px;line-height:8px;white-space:nowrap;color:#151515;transform:scaleX(0.96);transform-origin:0 0">Approved</div></div>
<div class="a" style="left:1157.0px;top:217.1px;width:49.6px;height:17.9px;overflow:hidden"><div class="a" style="left:3.0px;top:1.2px;font-style:italic;font-size:7.6px;line-height:8px;white-space:nowrap;color:#151515;transform:scaleX(0.96);transform-origin:0 0;letter-spacing:0.35px">11-Jan-23</div></div>
<div class="a" style="left:1206.6px;top:217.1px;width:57.3px;height:17.9px;overflow:hidden"><div class="a" style="left:2.9px;top:1.2px;font-style:italic;font-size:7.6px;line-height:8px;white-space:nowrap;color:#151515;transform:scaleX(0.96);transform-origin:0 0">Cash expense</div></div>
<div class="a" style="left:1263.9px;top:217.1px;width:70.1px;height:17.9px;overflow:hidden"><div class="a" style="left:2.6px;top:1.2px;font-style:italic;font-size:7.6px;line-height:8px;white-space:nowrap;color:#151515;transform:scaleX(0.96);transform-origin:0 0">Completed</div></div>
<div class="a" style="left:20.0px;top:235.0px;width:19.5px;height:9.0px;overflow:hidden"><div class="a" style="left:4.5px;top:1.2px;font-style:italic;font-size:7.6px;line-height:8px;white-space:nowrap;color:#151515;transform:scaleX(0.96);transform-origin:0 0">4</div></div>
<div class="a" style="left:39.5px;top:235.0px;width:42.0px;height:9.0px;overflow:hidden"><div class="a" style="left:4.0px;top:1.2px;font-style:italic;font-size:7.6px;line-height:8px;white-space:nowrap;color:#151515;transform:scaleX(0.96);transform-origin:0 0;letter-spacing:0.35px">11-Jan-23</div></div>
<div class="a" style="left:255.7px;top:235.0px;width:133.5px;height:9.0px;overflow:hidden"><div class="a" style="left:2.8px;top:1.2px;font-style:italic;font-size:7.6px;line-height:8px;white-space:nowrap;color:#151515;transform:scaleX(0.96);transform-origin:0 0">Replacement of Padlock for faucet</div></div>
<div class="a" style="left:389.2px;top:235.0px;width:180.0px;height:9.0px;overflow:hidden"><div class="a" style="left:2.8px;top:1.2px;font-style:italic;font-size:7.6px;line-height:8px;white-space:nowrap;color:#151515;transform:scaleX(0.96);transform-origin:0 0">Damaged Padlock; Last purchase of 1pc on</div></div>
<div class="a" style="left:569.2px;top:235.0px;width:135.3px;height:9.0px;overflow:hidden"><div class="a" style="left:5.3px;top:1.2px;font-style:italic;font-size:7.6px;line-height:8px;white-space:nowrap;color:#151515;transform:scaleX(0.96);transform-origin:0 0">1pc Padlock @ Php100</div></div>
<div class="a" style="left:948.6px;top:235.0px;width:39.0px;height:9.0px;overflow:hidden"><div class="a" style="left:2.4px;top:1.2px;font-style:italic;font-size:7.6px;line-height:8px;white-space:nowrap;color:#151515;transform:scaleX(0.96);transform-origin:0 0">High</div></div>
<div class="a" style="left:987.6px;top:235.0px;width:49.7px;height:9.0px;overflow:hidden"><div class="a" style="left:2.9px;top:1.2px;font-style:italic;font-size:7.6px;line-height:8px;white-space:nowrap;color:#151515;transform:scaleX(0.96);transform-origin:0 0">ASAP</div></div>
<div class="a" style="left:1106.4px;top:235.0px;width:50.6px;height:9.0px;overflow:hidden"><div class="a" style="left:2.6px;top:1.2px;font-style:italic;font-size:7.6px;line-height:8px;white-space:nowrap;color:#151515;transform:scaleX(0.96);transform-origin:0 0">Approved</div></div>
<div class="a" style="left:1157.0px;top:235.0px;width:49.6px;height:9.0px;overflow:hidden"><div class="a" style="left:3.0px;top:1.2px;font-style:italic;font-size:7.6px;line-height:8px;white-space:nowrap;color:#151515;transform:scaleX(0.96);transform-origin:0 0;letter-spacing:0.35px">11-Jan-23</div></div>
<div class="a" style="left:1206.6px;top:235.0px;width:57.3px;height:9.0px;overflow:hidden"><div class="a" style="left:2.9px;top:1.2px;font-style:italic;font-size:7.6px;line-height:8px;white-space:nowrap;color:#151515;transform:scaleX(0.96);transform-origin:0 0">Cash expense</div></div>
<div class="a" style="left:1263.9px;top:235.0px;width:70.1px;height:9.0px;overflow:hidden"><div class="a" style="left:2.6px;top:1.2px;font-style:italic;font-size:7.6px;line-height:8px;white-space:nowrap;color:#151515;transform:scaleX(0.96);transform-origin:0 0">Completed</div></div>
<div class="a" style="left:20.0px;top:244.0px;width:19.5px;height:9.2px;overflow:hidden"><div class="a" style="left:4.5px;top:1.2px;font-style:italic;font-size:7.6px;line-height:8px;white-space:nowrap;color:#151515;transform:scaleX(0.96);transform-origin:0 0">5</div></div>
<div class="a" style="left:39.5px;top:244.0px;width:42.0px;height:9.2px;overflow:hidden"><div class="a" style="left:4.0px;top:1.2px;font-style:italic;font-size:7.6px;line-height:8px;white-space:nowrap;color:#151515;transform:scaleX(0.96);transform-origin:0 0;letter-spacing:0.35px">12-Jan-23</div></div>
<div class="a" style="left:255.7px;top:244.0px;width:133.5px;height:9.2px;overflow:hidden"><div class="a" style="left:2.8px;top:1.2px;font-style:italic;font-size:7.6px;line-height:8px;white-space:nowrap;color:#151515;transform:scaleX(0.96);transform-origin:0 0">Cleaning of Chimney&#x27;s Upper part</div></div>
<div class="a" style="left:948.6px;top:244.0px;width:39.0px;height:9.2px;overflow:hidden"><div class="a" style="left:2.4px;top:1.2px;font-style:italic;font-size:7.6px;line-height:8px;white-space:nowrap;color:#151515;transform:scaleX(0.96);transform-origin:0 0">High</div></div>
<div class="a" style="left:987.6px;top:244.0px;width:49.7px;height:9.2px;overflow:hidden"><div class="a" style="left:2.9px;top:1.2px;font-style:italic;font-size:7.6px;line-height:8px;white-space:nowrap;color:#151515;transform:scaleX(0.96);transform-origin:0 0">ASAP</div></div>
<div class="a" style="left:1106.4px;top:244.0px;width:50.6px;height:9.2px;overflow:hidden"><div class="a" style="left:2.6px;top:1.2px;font-style:italic;font-size:7.6px;line-height:8px;white-space:nowrap;color:#151515;transform:scaleX(0.96);transform-origin:0 0">Approved</div></div>
<div class="a" style="left:1157.0px;top:244.0px;width:49.6px;height:9.2px;overflow:hidden"><div class="a" style="left:3.0px;top:1.2px;font-style:italic;font-size:7.6px;line-height:8px;white-space:nowrap;color:#151515;transform:scaleX(0.96);transform-origin:0 0;letter-spacing:0.35px">12-Jan-23</div></div>
<div class="a" style="left:1206.6px;top:244.0px;width:57.3px;height:9.2px;overflow:hidden"><div class="a" style="left:2.9px;top:1.2px;font-style:italic;font-size:7.6px;line-height:8px;white-space:nowrap;color:#151515;transform:scaleX(0.96);transform-origin:0 0">Cash expense</div></div>
<div class="a" style="left:1263.9px;top:244.0px;width:70.1px;height:9.2px;overflow:hidden"><div class="a" style="left:2.6px;top:1.2px;font-style:italic;font-size:7.6px;line-height:8px;white-space:nowrap;color:#151515;transform:scaleX(0.96);transform-origin:0 0">Completed</div></div>
<div class="a" style="left:20.0px;top:253.2px;width:19.5px;height:9.2px;overflow:hidden"><div class="a" style="left:4.5px;top:1.2px;font-style:italic;font-size:7.6px;line-height:8px;white-space:nowrap;color:#151515;transform:scaleX(0.96);transform-origin:0 0">6</div></div>
<div class="a" style="left:39.5px;top:253.2px;width:42.0px;height:9.2px;overflow:hidden"><div class="a" style="left:4.0px;top:1.2px;font-style:italic;font-size:7.6px;line-height:8px;white-space:nowrap;color:#151515;transform:scaleX(0.96);transform-origin:0 0;letter-spacing:0.35px">12-Jan-23</div></div>
<div class="a" style="left:255.7px;top:253.2px;width:133.5px;height:9.2px;overflow:hidden"><div class="a" style="left:2.8px;top:1.2px;font-style:italic;font-size:7.6px;line-height:8px;white-space:nowrap;color:#151515;transform:scaleX(0.96);transform-origin:0 0">Replacement of Toilet Pump for rest room</div></div>
<div class="a" style="left:389.2px;top:253.2px;width:180.0px;height:9.2px;overflow:hidden"><div class="a" style="left:2.8px;top:1.2px;font-style:italic;font-size:7.6px;line-height:8px;white-space:nowrap;color:#151515;transform:scaleX(0.96);transform-origin:0 0">Damaged Toilet Pump</div></div>
<div class="a" style="left:569.2px;top:253.2px;width:135.3px;height:9.2px;overflow:hidden"><div class="a" style="left:5.3px;top:1.2px;font-style:italic;font-size:7.6px;line-height:8px;white-space:nowrap;color:#151515;transform:scaleX(0.96);transform-origin:0 0">3pcs Toilet Pump @ Php60/pc</div></div>
<div class="a" style="left:948.6px;top:253.2px;width:39.0px;height:9.2px;overflow:hidden"><div class="a" style="left:2.4px;top:1.2px;font-style:italic;font-size:7.6px;line-height:8px;white-space:nowrap;color:#151515;transform:scaleX(0.96);transform-origin:0 0">High</div></div>
<div class="a" style="left:987.6px;top:253.2px;width:49.7px;height:9.2px;overflow:hidden"><div class="a" style="left:2.9px;top:1.2px;font-style:italic;font-size:7.6px;line-height:8px;white-space:nowrap;color:#151515;transform:scaleX(0.96);transform-origin:0 0">ASAP</div></div>
<div class="a" style="left:1106.4px;top:253.2px;width:50.6px;height:9.2px;overflow:hidden"><div class="a" style="left:2.6px;top:1.2px;font-style:italic;font-size:7.6px;line-height:8px;white-space:nowrap;color:#151515;transform:scaleX(0.96);transform-origin:0 0">Approved</div></div>
<div class="a" style="left:1157.0px;top:253.2px;width:49.6px;height:9.2px;overflow:hidden"><div class="a" style="left:3.0px;top:1.2px;font-style:italic;font-size:7.6px;line-height:8px;white-space:nowrap;color:#151515;transform:scaleX(0.96);transform-origin:0 0;letter-spacing:0.35px">12-Jan-23</div></div>
<div class="a" style="left:1206.6px;top:253.2px;width:57.3px;height:9.2px;overflow:hidden"><div class="a" style="left:2.9px;top:1.2px;font-style:italic;font-size:7.6px;line-height:8px;white-space:nowrap;color:#151515;transform:scaleX(0.96);transform-origin:0 0">Cash expense</div></div>
<div class="a" style="left:1263.9px;top:253.2px;width:70.1px;height:9.2px;overflow:hidden"><div class="a" style="left:2.6px;top:1.2px;font-style:italic;font-size:7.6px;line-height:8px;white-space:nowrap;color:#151515;transform:scaleX(0.96);transform-origin:0 0">Completed</div></div>
<div class="a" style="left:20.0px;top:262.4px;width:19.5px;height:17.8px;overflow:hidden"><div class="a" style="left:4.5px;top:1.2px;font-style:italic;font-size:7.6px;line-height:8px;white-space:nowrap;color:#151515;transform:scaleX(0.96);transform-origin:0 0">7</div></div>
<div class="a" style="left:39.5px;top:262.4px;width:42.0px;height:17.8px;overflow:hidden"><div class="a" style="left:4.0px;top:1.2px;font-style:italic;font-size:7.6px;line-height:8px;white-space:nowrap;color:#151515;transform:scaleX(0.96);transform-origin:0 0;letter-spacing:0.35px">13-Jan-23</div></div>
<div class="a" style="left:255.7px;top:262.4px;width:133.5px;height:17.8px;overflow:hidden"><div class="a" style="left:2.8px;top:1.2px;font-style:italic;font-size:7.6px;line-height:8px;white-space:nowrap;color:#151515;transform:scaleX(0.96);transform-origin:0 0">Repair of Dishwashing Machine</div></div>
<div class="a" style="left:569.2px;top:262.4px;width:135.3px;height:17.8px;overflow:hidden"><div class="a" style="left:5.3px;top:1.2px;font-style:italic;font-size:7.6px;line-height:8px;white-space:nowrap;color:#151515;transform:scaleX(0.96);transform-origin:0 0">1pc Switch-Circuit Board @ Php4,800</div></div>
<div class="a" style="left:948.6px;top:262.4px;width:39.0px;height:17.8px;overflow:hidden"><div class="a" style="left:2.4px;top:1.2px;font-style:italic;font-size:7.6px;line-height:8px;white-space:nowrap;color:#151515;transform:scaleX(0.96);transform-origin:0 0">High</div></div>
<div class="a" style="left:987.6px;top:262.4px;width:49.7px;height:17.8px;overflow:hidden"><div class="a" style="left:2.9px;top:1.2px;font-style:italic;font-size:7.6px;line-height:8px;white-space:nowrap;color:#151515;transform:scaleX(0.96);transform-origin:0 0">ASAP</div></div>
<div class="a" style="left:1106.4px;top:262.4px;width:50.6px;height:17.8px;overflow:hidden"><div class="a" style="left:2.6px;top:1.2px;font-style:italic;font-size:7.6px;line-height:8px;white-space:nowrap;color:#151515;transform:scaleX(0.96);transform-origin:0 0">Approved</div></div>
<div class="a" style="left:1157.0px;top:262.4px;width:49.6px;height:17.8px;overflow:hidden"><div class="a" style="left:3.0px;top:1.2px;font-style:italic;font-size:7.6px;line-height:8px;white-space:nowrap;color:#151515;transform:scaleX(0.96);transform-origin:0 0;letter-spacing:0.35px">13-Jan-23</div></div>
<div class="a" style="left:1206.6px;top:262.4px;width:57.3px;height:17.8px;overflow:hidden"><div class="a" style="left:2.9px;top:1.2px;font-style:italic;font-size:7.6px;line-height:8px;white-space:nowrap;color:#151515;transform:scaleX(0.96);transform-origin:0 0">Cash expense</div></div>
<div class="a" style="left:1263.9px;top:262.4px;width:70.1px;height:17.8px;overflow:hidden"><div class="a" style="left:2.6px;top:1.2px;font-style:italic;font-size:7.6px;line-height:8px;white-space:nowrap;color:#151515;transform:scaleX(0.96);transform-origin:0 0">Completed</div></div>
<div class="a" style="left:20.0px;top:280.2px;width:19.5px;height:9.1px;overflow:hidden"><div class="a" style="left:4.5px;top:1.2px;font-style:italic;font-size:7.6px;line-height:8px;white-space:nowrap;color:#151515;transform:scaleX(0.96);transform-origin:0 0">8</div></div>
<div class="a" style="left:39.5px;top:280.2px;width:42.0px;height:9.1px;overflow:hidden"><div class="a" style="left:4.0px;top:1.2px;font-style:italic;font-size:7.6px;line-height:8px;white-space:nowrap;color:#151515;transform:scaleX(0.96);transform-origin:0 0;letter-spacing:0.35px">13-Jan-23</div></div>
<div class="a" style="left:255.7px;top:280.2px;width:133.5px;height:9.1px;overflow:hidden"><div class="a" style="left:2.8px;top:1.2px;font-style:italic;font-size:7.6px;line-height:8px;white-space:nowrap;color:#151515;transform:scaleX(0.96);transform-origin:0 0">Installation of 360 Camera for Cashier&#x27;s</div></div>
<div class="a" style="left:569.2px;top:280.2px;width:135.3px;height:9.1px;overflow:hidden"><div class="a" style="left:5.3px;top:1.2px;font-style:italic;font-size:7.6px;line-height:8px;white-space:nowrap;color:#151515;transform:scaleX(0.96);transform-origin:0 0">2pcs 360 Camera @ Php3,500/pc</div></div>
<div class="a" style="left:948.6px;top:280.2px;width:39.0px;height:9.1px;overflow:hidden"><div class="a" style="left:2.4px;top:1.2px;font-style:italic;font-size:7.6px;line-height:8px;white-space:nowrap;color:#151515;transform:scaleX(0.96);transform-origin:0 0">High</div></div>
<div class="a" style="left:987.6px;top:280.2px;width:49.7px;height:9.1px;overflow:hidden"><div class="a" style="left:2.9px;top:1.2px;font-style:italic;font-size:7.6px;line-height:8px;white-space:nowrap;color:#151515;transform:scaleX(0.96);transform-origin:0 0">ASAP</div></div>
<div class="a" style="left:1106.4px;top:280.2px;width:50.6px;height:9.1px;overflow:hidden"><div class="a" style="left:2.6px;top:1.2px;font-style:italic;font-size:7.6px;line-height:8px;white-space:nowrap;color:#151515;transform:scaleX(0.96);transform-origin:0 0">Approved</div></div>
<div class="a" style="left:1157.0px;top:280.2px;width:49.6px;height:9.1px;overflow:hidden"><div class="a" style="left:3.0px;top:1.2px;font-style:italic;font-size:7.6px;line-height:8px;white-space:nowrap;color:#151515;transform:scaleX(0.96);transform-origin:0 0;letter-spacing:0.35px">13-Jan-23</div></div>
<div class="a" style="left:1206.6px;top:280.2px;width:57.3px;height:9.1px;overflow:hidden"><div class="a" style="left:2.9px;top:1.2px;font-style:italic;font-size:7.6px;line-height:8px;white-space:nowrap;color:#151515;transform:scaleX(0.96);transform-origin:0 0">Cash expense</div></div>
<div class="a" style="left:1263.9px;top:280.2px;width:70.1px;height:9.1px;overflow:hidden"><div class="a" style="left:2.6px;top:1.2px;font-style:italic;font-size:7.6px;line-height:8px;white-space:nowrap;color:#151515;transform:scaleX(0.96);transform-origin:0 0">Completed</div></div>
<div class="a" style="left:20.0px;top:289.3px;width:19.5px;height:9.5px;overflow:hidden"><div class="a" style="left:4.5px;top:1.2px;font-style:italic;font-size:7.6px;line-height:8px;white-space:nowrap;color:#151515;transform:scaleX(0.96);transform-origin:0 0">9</div></div>
<div class="a" style="left:39.5px;top:289.3px;width:42.0px;height:9.5px;overflow:hidden"><div class="a" style="left:4.0px;top:1.2px;font-style:italic;font-size:7.6px;line-height:8px;white-space:nowrap;color:#151515;transform:scaleX(0.96);transform-origin:0 0;letter-spacing:0.35px">14-Jan-23</div></div>
<div class="a" style="left:255.7px;top:289.3px;width:133.5px;height:9.5px;overflow:hidden"><div class="a" style="left:2.8px;top:1.2px;font-style:italic;font-size:7.6px;line-height:8px;white-space:nowrap;color:#151515;transform:scaleX(0.96);transform-origin:0 0">Renewal of Weighing Scale</div></div>
<div class="a" style="left:389.2px;top:289.3px;width:180.0px;height:9.5px;overflow:hidden"><div class="a" style="left:2.8px;top:1.2px;font-style:italic;font-size:7.6px;line-height:8px;white-space:nowrap;color:#151515;transform:scaleX(0.96);transform-origin:0 0">Expiry Date: 1/19/2023</div></div>
<div class="a" style="left:569.2px;top:289.3px;width:135.3px;height:9.5px;overflow:hidden"><div class="a" style="left:5.3px;top:1.2px;font-style:italic;font-size:7.6px;line-height:8px;white-space:nowrap;color:#151515;transform:scaleX(0.96);transform-origin:0 0">New Expiry Date: 4/19/2023</div></div>
<div class="a" style="left:948.6px;top:289.3px;width:39.0px;height:9.5px;overflow:hidden"><div class="a" style="left:2.4px;top:1.2px;font-style:italic;font-size:7.6px;line-height:8px;white-space:nowrap;color:#151515;transform:scaleX(0.96);transform-origin:0 0">High</div></div>
<div class="a" style="left:987.6px;top:289.3px;width:49.7px;height:9.5px;overflow:hidden"><div class="a" style="left:2.9px;top:1.2px;font-style:italic;font-size:7.6px;line-height:8px;white-space:nowrap;color:#151515;transform:scaleX(0.96);transform-origin:0 0">ASAP</div></div>
<div class="a" style="left:1106.4px;top:289.3px;width:50.6px;height:9.5px;overflow:hidden"><div class="a" style="left:2.6px;top:1.2px;font-style:italic;font-size:7.6px;line-height:8px;white-space:nowrap;color:#151515;transform:scaleX(0.96);transform-origin:0 0">Approved</div></div>
<div class="a" style="left:1157.0px;top:289.3px;width:49.6px;height:9.5px;overflow:hidden"><div class="a" style="left:3.0px;top:1.2px;font-style:italic;font-size:7.6px;line-height:8px;white-space:nowrap;color:#151515;transform:scaleX(0.96);transform-origin:0 0;letter-spacing:0.35px">14-Jan-23</div></div>
<div class="a" style="left:1206.6px;top:289.3px;width:57.3px;height:9.5px;overflow:hidden"><div class="a" style="left:2.9px;top:1.2px;font-style:italic;font-size:7.6px;line-height:8px;white-space:nowrap;color:#151515;transform:scaleX(0.96);transform-origin:0 0">Cash expense</div></div>
<div class="a" style="left:1263.9px;top:289.3px;width:70.1px;height:9.5px;overflow:hidden"><div class="a" style="left:2.6px;top:1.2px;font-style:italic;font-size:7.6px;line-height:8px;white-space:nowrap;color:#151515;transform:scaleX(0.96);transform-origin:0 0">Completed</div></div>
<div class="a" style="left:20.0px;top:298.8px;width:19.5px;height:9.2px;overflow:hidden"><div class="a" style="left:4.5px;top:1.2px;font-style:italic;font-size:7.6px;line-height:8px;white-space:nowrap;color:#151515;transform:scaleX(0.96);transform-origin:0 0">10</div></div>
<div class="a" style="left:39.5px;top:298.8px;width:42.0px;height:9.2px;overflow:hidden"><div class="a" style="left:4.0px;top:1.2px;font-style:italic;font-size:7.6px;line-height:8px;white-space:nowrap;color:#151515;transform:scaleX(0.96);transform-origin:0 0;letter-spacing:0.35px">17-Jan-23</div></div>
<div class="a" style="left:255.7px;top:298.8px;width:133.5px;height:9.2px;overflow:hidden"><div class="a" style="left:2.8px;top:1.2px;font-style:italic;font-size:7.6px;line-height:8px;white-space:nowrap;color:#151515;transform:scaleX(0.96);transform-origin:0 0">Cleaning of Drainage</div></div>
<div class="a" style="left:948.6px;top:298.8px;width:39.0px;height:9.2px;overflow:hidden"><div class="a" style="left:2.4px;top:1.2px;font-style:italic;font-size:7.6px;line-height:8px;white-space:nowrap;color:#151515;transform:scaleX(0.96);transform-origin:0 0">High</div></div>
<div class="a" style="left:987.6px;top:298.8px;width:49.7px;height:9.2px;overflow:hidden"><div class="a" style="left:2.9px;top:1.2px;font-style:italic;font-size:7.6px;line-height:8px;white-space:nowrap;color:#151515;transform:scaleX(0.96);transform-origin:0 0">ASAP</div></div>
<div class="a" style="left:1106.4px;top:298.8px;width:50.6px;height:9.2px;overflow:hidden"><div class="a" style="left:2.6px;top:1.2px;font-style:italic;font-size:7.6px;line-height:8px;white-space:nowrap;color:#151515;transform:scaleX(0.96);transform-origin:0 0">Approved</div></div>
<div class="a" style="left:1157.0px;top:298.8px;width:49.6px;height:9.2px;overflow:hidden"><div class="a" style="left:3.0px;top:1.2px;font-style:italic;font-size:7.6px;line-height:8px;white-space:nowrap;color:#151515;transform:scaleX(0.96);transform-origin:0 0;letter-spacing:0.35px">17-Jan-23</div></div>
<div class="a" style="left:1206.6px;top:298.8px;width:57.3px;height:9.2px;overflow:hidden"><div class="a" style="left:2.9px;top:1.2px;font-style:italic;font-size:7.6px;line-height:8px;white-space:nowrap;color:#151515;transform:scaleX(0.96);transform-origin:0 0">Cash expense</div></div>
<div class="a" style="left:1263.9px;top:298.8px;width:70.1px;height:9.2px;overflow:hidden"><div class="a" style="left:2.6px;top:1.2px;font-style:italic;font-size:7.6px;line-height:8px;white-space:nowrap;color:#151515;transform:scaleX(0.96);transform-origin:0 0">Completed</div></div>
<div class="a" style="left:20.0px;top:308.0px;width:19.5px;height:9.1px;overflow:hidden"><div class="a" style="left:4.5px;top:1.2px;font-style:italic;font-size:7.6px;line-height:8px;white-space:nowrap;color:#151515;transform:scaleX(0.96);transform-origin:0 0">11</div></div>
<div class="a" style="left:39.5px;top:308.0px;width:42.0px;height:9.1px;overflow:hidden"><div class="a" style="left:4.0px;top:1.2px;font-style:italic;font-size:7.6px;line-height:8px;white-space:nowrap;color:#151515;transform:scaleX(0.96);transform-origin:0 0;letter-spacing:0.35px">18-Jan-23</div></div>
<div class="a" style="left:255.7px;top:308.0px;width:133.5px;height:9.1px;overflow:hidden"><div class="a" style="left:2.8px;top:1.2px;font-style:italic;font-size:7.6px;line-height:8px;white-space:nowrap;color:#151515;transform:scaleX(0.96);transform-origin:0 0">Repair of Toilet Flush</div></div>
<div class="a" style="left:569.2px;top:308.0px;width:135.3px;height:9.1px;overflow:hidden"><div class="a" style="left:5.3px;top:1.2px;font-style:italic;font-size:7.6px;line-height:8px;white-space:nowrap;color:#151515;transform:scaleX(0.96);transform-origin:0 0">1pc Tank Fittings @ Php850, Hose @</div></div>
<div class="a" style="left:948.6px;top:308.0px;width:39.0px;height:9.1px;overflow:hidden"><div class="a" style="left:2.4px;top:1.2px;font-style:italic;font-size:7.6px;line-height:8px;white-space:nowrap;color:#151515;transform:scaleX(0.96);transform-origin:0 0">High</div></div>
<div class="a" style="left:987.6px;top:308.0px;width:49.7px;height:9.1px;overflow:hidden"><div class="a" style="left:2.9px;top:1.2px;font-style:italic;font-size:7.6px;line-height:8px;white-space:nowrap;color:#151515;transform:scaleX(0.96);transform-origin:0 0">ASAP</div></div>
<div class="a" style="left:1106.4px;top:308.0px;width:50.6px;height:9.1px;overflow:hidden"><div class="a" style="left:2.6px;top:1.2px;font-style:italic;font-size:7.6px;line-height:8px;white-space:nowrap;color:#151515;transform:scaleX(0.96);transform-origin:0 0">Approved</div></div>
<div class="a" style="left:1157.0px;top:308.0px;width:49.6px;height:9.1px;overflow:hidden"><div class="a" style="left:3.0px;top:1.2px;font-style:italic;font-size:7.6px;line-height:8px;white-space:nowrap;color:#151515;transform:scaleX(0.96);transform-origin:0 0;letter-spacing:0.35px">18-Jan-23</div></div>
<div class="a" style="left:1206.6px;top:308.0px;width:57.3px;height:9.1px;overflow:hidden"><div class="a" style="left:2.9px;top:1.2px;font-style:italic;font-size:7.6px;line-height:8px;white-space:nowrap;color:#151515;transform:scaleX(0.96);transform-origin:0 0">Cash expense</div></div>
<div class="a" style="left:1263.9px;top:308.0px;width:70.1px;height:9.1px;overflow:hidden"><div class="a" style="left:2.6px;top:1.2px;font-style:italic;font-size:7.6px;line-height:8px;white-space:nowrap;color:#151515;transform:scaleX(0.96);transform-origin:0 0">Completed</div></div>
<div class="a" style="left:20.0px;top:317.1px;width:19.5px;height:8.7px;overflow:hidden"><div class="a" style="left:4.5px;top:1.2px;font-style:italic;font-size:7.6px;line-height:8px;white-space:nowrap;color:#151515;transform:scaleX(0.96);transform-origin:0 0">12</div></div>
<div class="a" style="left:39.5px;top:317.1px;width:42.0px;height:8.7px;overflow:hidden"><div class="a" style="left:4.0px;top:1.2px;font-style:italic;font-size:7.6px;line-height:8px;white-space:nowrap;color:#151515;transform:scaleX(0.96);transform-origin:0 0;letter-spacing:0.35px">18-Jan-23</div></div>
<div class="a" style="left:255.7px;top:317.1px;width:133.5px;height:8.7px;overflow:hidden"><div class="a" style="left:2.8px;top:1.2px;font-style:italic;font-size:7.6px;line-height:8px;white-space:nowrap;color:#151515;transform:scaleX(0.96);transform-origin:0 0">Purchase of Chinese Lantern</div></div>
<div class="a" style="left:569.2px;top:317.1px;width:135.3px;height:8.7px;overflow:hidden"><div class="a" style="left:5.3px;top:1.2px;font-style:italic;font-size:7.6px;line-height:8px;white-space:nowrap;color:#151515;transform:scaleX(0.96);transform-origin:0 0">3pcs Chinese Lantern @ Php849/pc</div></div>
<div class="a" style="left:948.6px;top:317.1px;width:39.0px;height:8.7px;overflow:hidden"><div class="a" style="left:2.4px;top:1.2px;font-style:italic;font-size:7.6px;line-height:8px;white-space:nowrap;color:#151515;transform:scaleX(0.96);transform-origin:0 0">High</div></div>
<div class="a" style="left:987.6px;top:317.1px;width:49.7px;height:8.7px;overflow:hidden"><div class="a" style="left:2.9px;top:1.2px;font-style:italic;font-size:7.6px;line-height:8px;white-space:nowrap;color:#151515;transform:scaleX(0.96);transform-origin:0 0">ASAP</div></div>
<div class="a" style="left:1106.4px;top:317.1px;width:50.6px;height:8.7px;overflow:hidden"><div class="a" style="left:2.6px;top:1.2px;font-style:italic;font-size:7.6px;line-height:8px;white-space:nowrap;color:#151515;transform:scaleX(0.96);transform-origin:0 0">Approved</div></div>
<div class="a" style="left:1157.0px;top:317.1px;width:49.6px;height:8.7px;overflow:hidden"><div class="a" style="left:3.0px;top:1.2px;font-style:italic;font-size:7.6px;line-height:8px;white-space:nowrap;color:#151515;transform:scaleX(0.96);transform-origin:0 0;letter-spacing:0.35px">18-Jan-23</div></div>
<div class="a" style="left:1206.6px;top:317.1px;width:57.3px;height:8.7px;overflow:hidden"><div class="a" style="left:2.9px;top:1.2px;font-style:italic;font-size:7.6px;line-height:8px;white-space:nowrap;color:#151515;transform:scaleX(0.96);transform-origin:0 0">Cash expense</div></div>
<div class="a" style="left:1263.9px;top:317.1px;width:70.1px;height:8.7px;overflow:hidden"><div class="a" style="left:2.6px;top:1.2px;font-style:italic;font-size:7.6px;line-height:8px;white-space:nowrap;color:#151515;transform:scaleX(0.96);transform-origin:0 0">Completed</div></div>
<div class="a" style="left:20.0px;top:325.8px;width:19.5px;height:27.0px;overflow:hidden"><div class="a" style="left:4.5px;top:1.2px;font-style:italic;font-size:7.6px;line-height:8px;white-space:nowrap;color:#151515;transform:scaleX(0.96);transform-origin:0 0">13</div></div>
<div class="a" style="left:39.5px;top:325.8px;width:42.0px;height:27.0px;overflow:hidden"><div class="a" style="left:4.0px;top:1.2px;font-style:italic;font-size:7.6px;line-height:8px;white-space:nowrap;color:#151515;transform:scaleX(0.96);transform-origin:0 0;letter-spacing:0.35px">18-Jan-23</div></div>
<div class="a" style="left:255.7px;top:325.8px;width:133.5px;height:27.0px;overflow:hidden"><div class="a" style="left:2.8px;top:1.2px;font-style:italic;font-size:7.6px;line-height:8px;white-space:nowrap;color:#151515;transform:scaleX(0.96);transform-origin:0 0">Replacement of Busted Bulbs</div></div>
<div class="a" style="left:569.2px;top:325.8px;width:135.3px;height:27.0px;overflow:hidden"><div class="a" style="left:5.3px;top:1.2px;font-style:italic;font-size:7.6px;line-height:8px;white-space:nowrap;color:#151515;transform:scaleX(0.96);transform-origin:0 0">1pc Omni LTSG 1500 DL @ Php180, 1</div></div>
<div class="a" style="left:569.2px;top:325.8px;width:135.3px;height:27.0px;overflow:hidden"><div class="a" style="left:5.3px;top:10.1px;font-style:italic;font-size:7.6px;line-height:8px;white-space:nowrap;color:#151515;transform:scaleX(0.96);transform-origin:0 0">pc Omni 12v DL @ Php180, 1pc Omni</div></div>
<div class="a" style="left:569.2px;top:325.8px;width:135.3px;height:27.0px;overflow:hidden"><div class="a" style="left:5.3px;top:19.0px;font-style:italic;font-size:7.6px;line-height:8px;white-space:nowrap;color:#151515;transform:scaleX(0.96);transform-origin:0 0">6v WW @ Php90</div></div>
<div class="a" style="left:948.6px;top:325.8px;width:39.0px;height:27.0px;overflow:hidden"><div class="a" style="left:2.4px;top:1.2px;font-style:italic;font-size:7.6px;line-height:8px;white-space:nowrap;color:#151515;transform:scaleX(0.96);transform-origin:0 0">High</div></div>
<div class="a" style="left:987.6px;top:325.8px;width:49.7px;height:27.0px;overflow:hidden"><div class="a" style="left:2.9px;top:1.2px;font-style:italic;font-size:7.6px;line-height:8px;white-space:nowrap;color:#151515;transform:scaleX(0.96);transform-origin:0 0">ASAP</div></div>
<div class="a" style="left:1106.4px;top:325.8px;width:50.6px;height:27.0px;overflow:hidden"><div class="a" style="left:2.6px;top:1.2px;font-style:italic;font-size:7.6px;line-height:8px;white-space:nowrap;color:#151515;transform:scaleX(0.96);transform-origin:0 0">Approved</div></div>
<div class="a" style="left:1157.0px;top:325.8px;width:49.6px;height:27.0px;overflow:hidden"><div class="a" style="left:3.0px;top:1.2px;font-style:italic;font-size:7.6px;line-height:8px;white-space:nowrap;color:#151515;transform:scaleX(0.96);transform-origin:0 0;letter-spacing:0.35px">18-Jan-23</div></div>
<div class="a" style="left:1206.6px;top:325.8px;width:57.3px;height:27.0px;overflow:hidden"><div class="a" style="left:2.9px;top:1.2px;font-style:italic;font-size:7.6px;line-height:8px;white-space:nowrap;color:#151515;transform:scaleX(0.96);transform-origin:0 0">Cash expense</div></div>
<div class="a" style="left:1263.9px;top:325.8px;width:70.1px;height:27.0px;overflow:hidden"><div class="a" style="left:2.6px;top:1.2px;font-style:italic;font-size:7.6px;line-height:8px;white-space:nowrap;color:#151515;transform:scaleX(0.96);transform-origin:0 0">Completed</div></div>
<div class="a" style="left:20.0px;top:352.8px;width:19.5px;height:18.2px;overflow:hidden"><div class="a" style="left:4.5px;top:1.2px;font-style:italic;font-size:7.6px;line-height:8px;white-space:nowrap;color:#151515;transform:scaleX(0.96);transform-origin:0 0">14</div></div>
<div class="a" style="left:39.5px;top:352.8px;width:42.0px;height:18.2px;overflow:hidden"><div class="a" style="left:4.0px;top:1.2px;font-style:italic;font-size:7.6px;line-height:8px;white-space:nowrap;color:#151515;transform:scaleX(0.96);transform-origin:0 0;font-weight:bold;letter-spacing:0.1px;color:#111">########</div></div>
<div class="a" style="left:255.7px;top:352.8px;width:133.5px;height:18.2px;overflow:hidden"><div class="a" style="left:2.8px;top:1.2px;font-style:italic;font-size:7.6px;line-height:8px;white-space:nowrap;color:#151515;transform:scaleX(0.96);transform-origin:0 0">Repair of Food Serving Trolley</div></div>
<div class="a" style="left:569.2px;top:352.8px;width:135.3px;height:18.2px;overflow:hidden"><div class="a" style="left:5.3px;top:1.2px;font-style:italic;font-size:7.6px;line-height:8px;white-space:nowrap;color:#151515;transform:scaleX(0.96);transform-origin:0 0">2pcs China Rubber Wheel Swivel with</div></div>
<div class="a" style="left:569.2px;top:352.8px;width:135.3px;height:18.2px;overflow:hidden"><div class="a" style="left:5.3px;top:10.1px;font-style:italic;font-size:7.6px;line-height:8px;white-space:nowrap;color:#151515;transform:scaleX(0.96);transform-origin:0 0">Brake @ Php360/pc</div></div>
<div class="a" style="left:1157.0px;top:352.8px;width:49.6px;height:18.2px;overflow:hidden"><div class="a" style="left:3.0px;top:1.2px;font-style:italic;font-size:7.6px;line-height:8px;white-space:nowrap;color:#151515;transform:scaleX(0.96);transform-origin:0 0;letter-spacing:0.35px">20-Jan-23</div></div>
<div class="a" style="left:948.6px;top:352.8px;width:39.0px;height:18.2px;overflow:hidden"><div class="a" style="left:2.4px;top:1.2px;font-style:italic;font-size:7.6px;line-height:8px;white-space:nowrap;color:#151515;transform:scaleX(0.96);transform-origin:0 0">High</div></div>
<div class="a" style="left:987.6px;top:352.8px;width:49.7px;height:18.2px;overflow:hidden"><div class="a" style="left:2.9px;top:1.2px;font-style:italic;font-size:7.6px;line-height:8px;white-space:nowrap;color:#151515;transform:scaleX(0.96);transform-origin:0 0">ASAP</div></div>
<div class="a" style="left:1106.4px;top:352.8px;width:50.6px;height:18.2px;overflow:hidden"><div class="a" style="left:2.6px;top:1.2px;font-style:italic;font-size:7.6px;line-height:8px;white-space:nowrap;color:#151515;transform:scaleX(0.96);transform-origin:0 0">Approved</div></div>
<div class="a" style="left:1206.6px;top:352.8px;width:57.3px;height:18.2px;overflow:hidden"><div class="a" style="left:2.9px;top:1.2px;font-style:italic;font-size:7.6px;line-height:8px;white-space:nowrap;color:#151515;transform:scaleX(0.96);transform-origin:0 0">Cash expense</div></div>
<div class="a" style="left:1263.9px;top:352.8px;width:70.1px;height:18.2px;overflow:hidden"><div class="a" style="left:2.6px;top:1.2px;font-style:italic;font-size:7.6px;line-height:8px;white-space:nowrap;color:#151515;transform:scaleX(0.96);transform-origin:0 0">Completed</div></div>
<div class="a" style="left:20.0px;top:371.0px;width:19.5px;height:18.3px;overflow:hidden"><div class="a" style="left:4.5px;top:1.2px;font-style:italic;font-size:7.6px;line-height:8px;white-space:nowrap;color:#151515;transform:scaleX(0.96);transform-origin:0 0">15</div></div>
<div class="a" style="left:39.5px;top:371.0px;width:42.0px;height:18.3px;overflow:hidden"><div class="a" style="left:4.0px;top:1.2px;font-style:italic;font-size:7.6px;line-height:8px;white-space:nowrap;color:#151515;transform:scaleX(0.96);transform-origin:0 0;letter-spacing:0.35px">21-Jan-23</div></div>
<div class="a" style="left:255.7px;top:371.0px;width:133.5px;height:18.3px;overflow:hidden"><div class="a" style="left:2.8px;top:1.2px;font-style:italic;font-size:7.6px;line-height:8px;white-space:nowrap;color:#151515;transform:scaleX(0.96);transform-origin:0 0">Replacement of Busted Bulbs</div></div>
<div class="a" style="left:569.2px;top:371.0px;width:135.3px;height:18.3px;overflow:hidden"><div class="a" style="left:5.3px;top:1.2px;font-style:italic;font-size:7.6px;line-height:8px;white-space:nowrap;color:#151515;transform:scaleX(0.96);transform-origin:0 0">2pcs Firefly Elite T5ElctrnicFixture</div></div>
<div class="a" style="left:569.2px;top:371.0px;width:135.3px;height:18.3px;overflow:hidden"><div class="a" style="left:5.3px;top:10.1px;font-style:italic;font-size:7.6px;line-height:8px;white-space:nowrap;color:#151515;transform:scaleX(0.96);transform-origin:0 0">WW21WF @ Php299</div></div>
<div class="a" style="left:1157.0px;top:371.0px;width:49.6px;height:18.3px;overflow:hidden"><div class="a" style="left:3.0px;top:1.2px;font-style:italic;font-size:7.6px;line-height:8px;white-space:nowrap;color:#151515;transform:scaleX(0.96);transform-origin:0 0">1/21/2023</div></div>
<div class="a" style="left:948.6px;top:371.0px;width:39.0px;height:18.3px;overflow:hidden"><div class="a" style="left:2.4px;top:1.2px;font-style:italic;font-size:7.6px;line-height:8px;white-space:nowrap;color:#151515;transform:scaleX(0.96);transform-origin:0 0">High</div></div>
<div class="a" style="left:987.6px;top:371.0px;width:49.7px;height:18.3px;overflow:hidden"><div class="a" style="left:2.9px;top:1.2px;font-style:italic;font-size:7.6px;line-height:8px;white-space:nowrap;color:#151515;transform:scaleX(0.96);transform-origin:0 0">ASAP</div></div>
<div class="a" style="left:1106.4px;top:371.0px;width:50.6px;height:18.3px;overflow:hidden"><div class="a" style="left:2.6px;top:1.2px;font-style:italic;font-size:7.6px;line-height:8px;white-space:nowrap;color:#151515;transform:scaleX(0.96);transform-origin:0 0">Approved</div></div>
<div class="a" style="left:1206.6px;top:371.0px;width:57.3px;height:18.3px;overflow:hidden"><div class="a" style="left:2.9px;top:1.2px;font-style:italic;font-size:7.6px;line-height:8px;white-space:nowrap;color:#151515;transform:scaleX(0.96);transform-origin:0 0">Cash expense</div></div>
<div class="a" style="left:1263.9px;top:371.0px;width:70.1px;height:18.3px;overflow:hidden"><div class="a" style="left:2.6px;top:1.2px;font-style:italic;font-size:7.6px;line-height:8px;white-space:nowrap;color:#151515;transform:scaleX(0.96);transform-origin:0 0">Completed</div></div>
<div class="a" style="left:20.0px;top:389.3px;width:19.5px;height:9.5px;overflow:hidden"><div class="a" style="left:4.5px;top:1.2px;font-style:italic;font-size:7.6px;line-height:8px;white-space:nowrap;color:#151515;transform:scaleX(0.96);transform-origin:0 0">16</div></div>
<div class="a" style="left:39.5px;top:389.3px;width:42.0px;height:9.5px;overflow:hidden"><div class="a" style="left:4.0px;top:1.2px;font-style:italic;font-size:7.6px;line-height:8px;white-space:nowrap;color:#151515;transform:scaleX(0.96);transform-origin:0 0;letter-spacing:0.35px">21-Jan-23</div></div>
<div class="a" style="left:255.7px;top:389.3px;width:133.5px;height:9.5px;overflow:hidden"><div class="a" style="left:2.8px;top:1.2px;font-style:italic;font-size:7.6px;line-height:8px;white-space:nowrap;color:#151515;transform:scaleX(0.96);transform-origin:0 0">Cleaning of Drainage</div></div>
<div class="a" style="left:1157.0px;top:389.3px;width:49.6px;height:9.5px;overflow:hidden"><div class="a" style="left:3.0px;top:1.2px;font-style:italic;font-size:7.6px;line-height:8px;white-space:nowrap;color:#151515;transform:scaleX(0.96);transform-origin:0 0;letter-spacing:0.35px">21-Jan-23</div></div>
<div class="a" style="left:948.6px;top:389.3px;width:39.0px;height:9.5px;overflow:hidden"><div class="a" style="left:2.4px;top:1.2px;font-style:italic;font-size:7.6px;line-height:8px;white-space:nowrap;color:#151515;transform:scaleX(0.96);transform-origin:0 0">High</div></div>
<div class="a" style="left:987.6px;top:389.3px;width:49.7px;height:9.5px;overflow:hidden"><div class="a" style="left:2.9px;top:1.2px;font-style:italic;font-size:7.6px;line-height:8px;white-space:nowrap;color:#151515;transform:scaleX(0.96);transform-origin:0 0">ASAP</div></div>
<div class="a" style="left:1106.4px;top:389.3px;width:50.6px;height:9.5px;overflow:hidden"><div class="a" style="left:2.6px;top:1.2px;font-style:italic;font-size:7.6px;line-height:8px;white-space:nowrap;color:#151515;transform:scaleX(0.96);transform-origin:0 0">Approved</div></div>
<div class="a" style="left:1206.6px;top:389.3px;width:57.3px;height:9.5px;overflow:hidden"><div class="a" style="left:2.9px;top:1.2px;font-style:italic;font-size:7.6px;line-height:8px;white-space:nowrap;color:#151515;transform:scaleX(0.96);transform-origin:0 0">Cash expense</div></div>
<div class="a" style="left:1263.9px;top:389.3px;width:70.1px;height:9.5px;overflow:hidden"><div class="a" style="left:2.6px;top:1.2px;font-style:italic;font-size:7.6px;line-height:8px;white-space:nowrap;color:#151515;transform:scaleX(0.96);transform-origin:0 0">Completed</div></div>
<div class="a" style="left:20.0px;top:398.8px;width:19.5px;height:8.7px;overflow:hidden"><div class="a" style="left:4.5px;top:1.2px;font-style:italic;font-size:7.6px;line-height:8px;white-space:nowrap;color:#151515;transform:scaleX(0.96);transform-origin:0 0">17</div></div>
<div class="a" style="left:39.5px;top:398.8px;width:42.0px;height:8.7px;overflow:hidden"><div class="a" style="left:4.0px;top:1.2px;font-style:italic;font-size:7.6px;line-height:8px;white-space:nowrap;color:#151515;transform:scaleX(0.96);transform-origin:0 0;font-weight:bold;letter-spacing:0.1px;color:#111">########</div></div>
<div class="a" style="left:255.7px;top:398.8px;width:133.5px;height:8.7px;overflow:hidden"><div class="a" style="left:2.8px;top:1.2px;font-style:italic;font-size:7.6px;line-height:8px;white-space:nowrap;color:#151515;transform:scaleX(0.96);transform-origin:0 0">Replacement of Sprayer</div></div>
<div class="a" style="left:389.2px;top:398.8px;width:180.0px;height:8.7px;overflow:hidden"><div class="a" style="left:2.8px;top:1.2px;font-style:italic;font-size:7.6px;line-height:8px;white-space:nowrap;color:#151515;transform:scaleX(0.96);transform-origin:0 0">Damaged Sprayer</div></div>
<div class="a" style="left:569.2px;top:398.8px;width:135.3px;height:8.7px;overflow:hidden"><div class="a" style="left:5.3px;top:1.2px;font-style:italic;font-size:7.6px;line-height:8px;white-space:nowrap;color:#151515;transform:scaleX(0.96);transform-origin:0 0">5pcs Watering pot @ Php38, 8pcs Spray</div></div>
<div class="a" style="left:1157.0px;top:398.8px;width:49.6px;height:8.7px;overflow:hidden"><div class="a" style="left:3.0px;top:1.2px;font-style:italic;font-size:7.6px;line-height:8px;white-space:nowrap;color:#151515;transform:scaleX(0.96);transform-origin:0 0;letter-spacing:0.35px">22-Jan-23</div></div>
<div class="a" style="left:948.6px;top:398.8px;width:39.0px;height:8.7px;overflow:hidden"><div class="a" style="left:2.4px;top:1.2px;font-style:italic;font-size:7.6px;line-height:8px;white-space:nowrap;color:#151515;transform:scaleX(0.96);transform-origin:0 0">High</div></div>
<div class="a" style="left:987.6px;top:398.8px;width:49.7px;height:8.7px;overflow:hidden"><div class="a" style="left:2.9px;top:1.2px;font-style:italic;font-size:7.6px;line-height:8px;white-space:nowrap;color:#151515;transform:scaleX(0.96);transform-origin:0 0">ASAP</div></div>
<div class="a" style="left:1106.4px;top:398.8px;width:50.6px;height:8.7px;overflow:hidden"><div class="a" style="left:2.6px;top:1.2px;font-style:italic;font-size:7.6px;line-height:8px;white-space:nowrap;color:#151515;transform:scaleX(0.96);transform-origin:0 0">Approved</div></div>
<div class="a" style="left:1206.6px;top:398.8px;width:57.3px;height:8.7px;overflow:hidden"><div class="a" style="left:2.9px;top:1.2px;font-style:italic;font-size:7.6px;line-height:8px;white-space:nowrap;color:#151515;transform:scaleX(0.96);transform-origin:0 0">Cash expense</div></div>
<div class="a" style="left:1263.9px;top:398.8px;width:70.1px;height:8.7px;overflow:hidden"><div class="a" style="left:2.6px;top:1.2px;font-style:italic;font-size:7.6px;line-height:8px;white-space:nowrap;color:#151515;transform:scaleX(0.96);transform-origin:0 0">Completed</div></div>
<div class="a" style="left:20.0px;top:407.5px;width:19.5px;height:27.5px;overflow:hidden"><div class="a" style="left:4.5px;top:1.2px;font-style:italic;font-size:7.6px;line-height:8px;white-space:nowrap;color:#151515;transform:scaleX(0.96);transform-origin:0 0">18</div></div>
<div class="a" style="left:39.5px;top:407.5px;width:42.0px;height:27.5px;overflow:hidden"><div class="a" style="left:4.0px;top:1.2px;font-style:italic;font-size:7.6px;line-height:8px;white-space:nowrap;color:#151515;transform:scaleX(0.96);transform-origin:0 0;font-weight:bold;letter-spacing:0.1px;color:#111">########</div></div>
<div class="a" style="left:255.7px;top:407.5px;width:133.5px;height:27.5px;overflow:hidden"><div class="a" style="left:2.8px;top:1.2px;font-style:italic;font-size:7.6px;line-height:8px;white-space:nowrap;color:#151515;transform:scaleX(0.96);transform-origin:0 0">Purchase of Towel for table, utensils</div></div>
<div class="a" style="left:255.7px;top:407.5px;width:133.5px;height:27.5px;overflow:hidden"><div class="a" style="left:2.8px;top:10.1px;font-style:italic;font-size:7.6px;line-height:8px;white-space:nowrap;color:#151515;transform:scaleX(0.96);transform-origin:0 0">and coffee bar</div></div>
<div class="a" style="left:569.2px;top:407.5px;width:135.3px;height:27.5px;overflow:hidden"><div class="a" style="left:5.3px;top:1.2px;font-style:italic;font-size:7.6px;line-height:8px;white-space:nowrap;color:#151515;transform:scaleX(0.96);transform-origin:0 0">1dozen Face towel @ Php180, 1dozen</div></div>
<div class="a" style="left:569.2px;top:407.5px;width:135.3px;height:27.5px;overflow:hidden"><div class="a" style="left:5.3px;top:10.1px;font-style:italic;font-size:7.6px;line-height:8px;white-space:nowrap;color:#151515;transform:scaleX(0.96);transform-origin:0 0">Face towel @ Php180, 1dozen Hand</div></div>
<div class="a" style="left:569.2px;top:407.5px;width:135.3px;height:27.5px;overflow:hidden"><div class="a" style="left:5.3px;top:19.0px;font-style:italic;font-size:7.6px;line-height:8px;white-space:nowrap;color:#151515;transform:scaleX(0.96);transform-origin:0 0">towel @ Php320</div></div>
<div class="a" style="left:1157.0px;top:407.5px;width:49.6px;height:27.5px;overflow:hidden"><div class="a" style="left:3.0px;top:1.2px;font-style:italic;font-size:7.6px;line-height:8px;white-space:nowrap;color:#151515;transform:scaleX(0.96);transform-origin:0 0;letter-spacing:0.35px">22-Jan-23</div></div>
<div class="a" style="left:948.6px;top:407.5px;width:39.0px;height:27.5px;overflow:hidden"><div class="a" style="left:2.4px;top:1.2px;font-style:italic;font-size:7.6px;line-height:8px;white-space:nowrap;color:#151515;transform:scaleX(0.96);transform-origin:0 0">High</div></div>
<div class="a" style="left:987.6px;top:407.5px;width:49.7px;height:27.5px;overflow:hidden"><div class="a" style="left:2.9px;top:1.2px;font-style:italic;font-size:7.6px;line-height:8px;white-space:nowrap;color:#151515;transform:scaleX(0.96);transform-origin:0 0">ASAP</div></div>
<div class="a" style="left:1106.4px;top:407.5px;width:50.6px;height:27.5px;overflow:hidden"><div class="a" style="left:2.6px;top:1.2px;font-style:italic;font-size:7.6px;line-height:8px;white-space:nowrap;color:#151515;transform:scaleX(0.96);transform-origin:0 0">Approved</div></div>
<div class="a" style="left:1206.6px;top:407.5px;width:57.3px;height:27.5px;overflow:hidden"><div class="a" style="left:2.9px;top:1.2px;font-style:italic;font-size:7.6px;line-height:8px;white-space:nowrap;color:#151515;transform:scaleX(0.96);transform-origin:0 0">Cash expense</div></div>
<div class="a" style="left:1263.9px;top:407.5px;width:70.1px;height:27.5px;overflow:hidden"><div class="a" style="left:2.6px;top:1.2px;font-style:italic;font-size:7.6px;line-height:8px;white-space:nowrap;color:#151515;transform:scaleX(0.96);transform-origin:0 0">Completed</div></div>
<div class="a" style="left:20.0px;top:435.0px;width:19.5px;height:9.0px;overflow:hidden"><div class="a" style="left:4.5px;top:1.2px;font-style:italic;font-size:7.6px;line-height:8px;white-space:nowrap;color:#151515;transform:scaleX(0.96);transform-origin:0 0">19</div></div>
<div class="a" style="left:39.5px;top:435.0px;width:42.0px;height:9.0px;overflow:hidden"><div class="a" style="left:4.0px;top:1.2px;font-style:italic;font-size:7.6px;line-height:8px;white-space:nowrap;color:#151515;transform:scaleX(0.96);transform-origin:0 0;font-weight:bold;letter-spacing:0.1px;color:#111">########</div></div>
<div class="a" style="left:255.7px;top:435.0px;width:133.5px;height:9.0px;overflow:hidden"><div class="a" style="left:2.8px;top:1.2px;font-style:italic;font-size:7.6px;line-height:8px;white-space:nowrap;color:#151515;transform:scaleX(0.96);transform-origin:0 0">Cleaning of Drainage</div></div>
<div class="a" style="left:1157.0px;top:435.0px;width:49.6px;height:9.0px;overflow:hidden"><div class="a" style="left:3.0px;top:1.2px;font-style:italic;font-size:7.6px;line-height:8px;white-space:nowrap;color:#151515;transform:scaleX(0.96);transform-origin:0 0;letter-spacing:0.35px">24-Jan-23</div></div>
<div class="a" style="left:948.6px;top:435.0px;width:39.0px;height:9.0px;overflow:hidden"><div class="a" style="left:2.4px;top:1.2px;font-style:italic;font-size:7.6px;line-height:8px;white-space:nowrap;color:#151515;transform:scaleX(0.96);transform-origin:0 0">High</div></div>
<div class="a" style="left:987.6px;top:435.0px;width:49.7px;height:9.0px;overflow:hidden"><div class="a" style="left:2.9px;top:1.2px;font-style:italic;font-size:7.6px;line-height:8px;white-space:nowrap;color:#151515;transform:scaleX(0.96);transform-origin:0 0">ASAP</div></div>
<div class="a" style="left:1106.4px;top:435.0px;width:50.6px;height:9.0px;overflow:hidden"><div class="a" style="left:2.6px;top:1.2px;font-style:italic;font-size:7.6px;line-height:8px;white-space:nowrap;color:#151515;transform:scaleX(0.96);transform-origin:0 0">Approved</div></div>
<div class="a" style="left:1206.6px;top:435.0px;width:57.3px;height:9.0px;overflow:hidden"><div class="a" style="left:2.9px;top:1.2px;font-style:italic;font-size:7.6px;line-height:8px;white-space:nowrap;color:#151515;transform:scaleX(0.96);transform-origin:0 0">Cash expense</div></div>
<div class="a" style="left:1263.9px;top:435.0px;width:70.1px;height:9.0px;overflow:hidden"><div class="a" style="left:2.6px;top:1.2px;font-style:italic;font-size:7.6px;line-height:8px;white-space:nowrap;color:#151515;transform:scaleX(0.96);transform-origin:0 0">Completed</div></div>
<div class="a" style="left:20.0px;top:444.0px;width:19.5px;height:9.2px;overflow:hidden"><div class="a" style="left:4.5px;top:1.2px;font-style:italic;font-size:7.6px;line-height:8px;white-space:nowrap;color:#151515;transform:scaleX(0.96);transform-origin:0 0">20</div></div>
<div class="a" style="left:39.5px;top:444.0px;width:42.0px;height:9.2px;overflow:hidden"><div class="a" style="left:4.0px;top:1.2px;font-style:italic;font-size:7.6px;line-height:8px;white-space:nowrap;color:#151515;transform:scaleX(0.96);transform-origin:0 0;font-weight:bold;letter-spacing:0.1px;color:#111">########</div></div>
<div class="a" style="left:255.7px;top:444.0px;width:133.5px;height:9.2px;overflow:hidden"><div class="a" style="left:2.8px;top:1.2px;font-style:italic;font-size:7.6px;line-height:8px;white-space:nowrap;color:#151515;transform:scaleX(0.96);transform-origin:0 0">Purchase of Tarpaulin for display</div></div>
<div class="a" style="left:569.2px;top:444.0px;width:135.3px;height:9.2px;overflow:hidden"><div class="a" style="left:5.3px;top:1.2px;font-style:italic;font-size:7.6px;line-height:8px;white-space:nowrap;color:#151515;transform:scaleX(0.96);transform-origin:0 0">1pc Tarpaulin @ Php2,450</div></div>
<div class="a" style="left:1157.0px;top:444.0px;width:49.6px;height:9.2px;overflow:hidden"><div class="a" style="left:3.0px;top:1.2px;font-style:italic;font-size:7.6px;line-height:8px;white-space:nowrap;color:#151515;transform:scaleX(0.96);transform-origin:0 0;letter-spacing:0.35px">24-Jan-23</div></div>
<div class="a" style="left:948.6px;top:444.0px;width:39.0px;height:9.2px;overflow:hidden"><div class="a" style="left:2.4px;top:1.2px;font-style:italic;font-size:7.6px;line-height:8px;white-space:nowrap;color:#151515;transform:scaleX(0.96);transform-origin:0 0">High</div></div>
<div class="a" style="left:987.6px;top:444.0px;width:49.7px;height:9.2px;overflow:hidden"><div class="a" style="left:2.9px;top:1.2px;font-style:italic;font-size:7.6px;line-height:8px;white-space:nowrap;color:#151515;transform:scaleX(0.96);transform-origin:0 0">ASAP</div></div>
<div class="a" style="left:1106.4px;top:444.0px;width:50.6px;height:9.2px;overflow:hidden"><div class="a" style="left:2.6px;top:1.2px;font-style:italic;font-size:7.6px;line-height:8px;white-space:nowrap;color:#151515;transform:scaleX(0.96);transform-origin:0 0">Approved</div></div>
<div class="a" style="left:1206.6px;top:444.0px;width:57.3px;height:9.2px;overflow:hidden"><div class="a" style="left:2.9px;top:1.2px;font-style:italic;font-size:7.6px;line-height:8px;white-space:nowrap;color:#151515;transform:scaleX(0.96);transform-origin:0 0">Cash expense</div></div>
<div class="a" style="left:1263.9px;top:444.0px;width:70.1px;height:9.2px;overflow:hidden"><div class="a" style="left:2.6px;top:1.2px;font-style:italic;font-size:7.6px;line-height:8px;white-space:nowrap;color:#151515;transform:scaleX(0.96);transform-origin:0 0">Completed</div></div>
<div class="a" style="left:20.0px;top:453.2px;width:19.5px;height:8.7px;overflow:hidden"><div class="a" style="left:4.5px;top:1.2px;font-style:italic;font-size:7.6px;line-height:8px;white-space:nowrap;color:#151515;transform:scaleX(0.96);transform-origin:0 0">21</div></div>
<div class="a" style="left:39.5px;top:453.2px;width:42.0px;height:8.7px;overflow:hidden"><div class="a" style="left:4.0px;top:1.2px;font-style:italic;font-size:7.6px;line-height:8px;white-space:nowrap;color:#151515;transform:scaleX(0.96);transform-origin:0 0;font-weight:bold;letter-spacing:0.1px;color:#111">########</div></div>
<div class="a" style="left:255.7px;top:453.2px;width:133.5px;height:8.7px;overflow:hidden"><div class="a" style="left:2.8px;top:1.2px;font-style:italic;font-size:7.6px;line-height:8px;white-space:nowrap;color:#151515;transform:scaleX(0.96);transform-origin:0 0">Cleaning of Chimney</div></div>
<div class="a" style="left:1157.0px;top:453.2px;width:49.6px;height:8.7px;overflow:hidden"><div class="a" style="left:3.0px;top:1.2px;font-style:italic;font-size:7.6px;line-height:8px;white-space:nowrap;color:#151515;transform:scaleX(0.96);transform-origin:0 0;letter-spacing:0.35px">25-Jan-23</div></div>
<div class="a" style="left:948.6px;top:453.2px;width:39.0px;height:8.7px;overflow:hidden"><div class="a" style="left:2.4px;top:1.2px;font-style:italic;font-size:7.6px;line-height:8px;white-space:nowrap;color:#151515;transform:scaleX(0.96);transform-origin:0 0">High</div></div>
<div class="a" style="left:987.6px;top:453.2px;width:49.7px;height:8.7px;overflow:hidden"><div class="a" style="left:2.9px;top:1.2px;font-style:italic;font-size:7.6px;line-height:8px;white-space:nowrap;color:#151515;transform:scaleX(0.96);transform-origin:0 0">ASAP</div></div>
<div class="a" style="left:1106.4px;top:453.2px;width:50.6px;height:8.7px;overflow:hidden"><div class="a" style="left:2.6px;top:1.2px;font-style:italic;font-size:7.6px;line-height:8px;white-space:nowrap;color:#151515;transform:scaleX(0.96);transform-origin:0 0">Approved</div></div>
<div class="a" style="left:1206.6px;top:453.2px;width:57.3px;height:8.7px;overflow:hidden"><div class="a" style="left:2.9px;top:1.2px;font-style:italic;font-size:7.6px;line-height:8px;white-space:nowrap;color:#151515;transform:scaleX(0.96);transform-origin:0 0">Cash expense</div></div>
<div class="a" style="left:1263.9px;top:453.2px;width:70.1px;height:8.7px;overflow:hidden"><div class="a" style="left:2.6px;top:1.2px;font-style:italic;font-size:7.6px;line-height:8px;white-space:nowrap;color:#151515;transform:scaleX(0.96);transform-origin:0 0">Completed</div></div>
<div class="a" style="left:20.0px;top:461.9px;width:19.5px;height:9.1px;overflow:hidden"><div class="a" style="left:4.5px;top:1.2px;font-style:italic;font-size:7.6px;line-height:8px;white-space:nowrap;color:#151515;transform:scaleX(0.96);transform-origin:0 0">22</div></div>
<div class="a" style="left:39.5px;top:461.9px;width:42.0px;height:9.1px;overflow:hidden"><div class="a" style="left:4.0px;top:1.2px;font-style:italic;font-size:7.6px;line-height:8px;white-space:nowrap;color:#151515;transform:scaleX(0.96);transform-origin:0 0;font-weight:bold;letter-spacing:0.1px;color:#111">########</div></div>
<div class="a" style="left:255.7px;top:461.9px;width:133.5px;height:9.1px;overflow:hidden"><div class="a" style="left:2.8px;top:1.2px;font-style:italic;font-size:7.6px;line-height:8px;white-space:nowrap;color:#151515;transform:scaleX(0.96);transform-origin:0 0">Cleaning of Chimney&#x27;s Upper part</div></div>
<div class="a" style="left:1157.0px;top:461.9px;width:49.6px;height:9.1px;overflow:hidden"><div class="a" style="left:3.0px;top:1.2px;font-style:italic;font-size:7.6px;line-height:8px;white-space:nowrap;color:#151515;transform:scaleX(0.96);transform-origin:0 0;letter-spacing:0.35px">26-Jan-23</div></div>
<div class="a" style="left:948.6px;top:461.9px;width:39.0px;height:9.1px;overflow:hidden"><div class="a" style="left:2.4px;top:1.2px;font-style:italic;font-size:7.6px;line-height:8px;white-space:nowrap;color:#151515;transform:scaleX(0.96);transform-origin:0 0">High</div></div>
<div class="a" style="left:987.6px;top:461.9px;width:49.7px;height:9.1px;overflow:hidden"><div class="a" style="left:2.9px;top:1.2px;font-style:italic;font-size:7.6px;line-height:8px;white-space:nowrap;color:#151515;transform:scaleX(0.96);transform-origin:0 0">ASAP</div></div>
<div class="a" style="left:1106.4px;top:461.9px;width:50.6px;height:9.1px;overflow:hidden"><div class="a" style="left:2.6px;top:1.2px;font-style:italic;font-size:7.6px;line-height:8px;white-space:nowrap;color:#151515;transform:scaleX(0.96);transform-origin:0 0">Approved</div></div>
<div class="a" style="left:1206.6px;top:461.9px;width:57.3px;height:9.1px;overflow:hidden"><div class="a" style="left:2.9px;top:1.2px;font-style:italic;font-size:7.6px;line-height:8px;white-space:nowrap;color:#151515;transform:scaleX(0.96);transform-origin:0 0">Cash expense</div></div>
<div class="a" style="left:1263.9px;top:461.9px;width:70.1px;height:9.1px;overflow:hidden"><div class="a" style="left:2.6px;top:1.2px;font-style:italic;font-size:7.6px;line-height:8px;white-space:nowrap;color:#151515;transform:scaleX(0.96);transform-origin:0 0">Completed</div></div>
<div class="a" style="left:20.0px;top:471.0px;width:19.5px;height:9.2px;overflow:hidden"><div class="a" style="left:4.5px;top:1.2px;font-style:italic;font-size:7.6px;line-height:8px;white-space:nowrap;color:#151515;transform:scaleX(0.96);transform-origin:0 0">23</div></div>
<div class="a" style="left:39.5px;top:471.0px;width:42.0px;height:9.2px;overflow:hidden"><div class="a" style="left:4.0px;top:1.2px;font-style:italic;font-size:7.6px;line-height:8px;white-space:nowrap;color:#151515;transform:scaleX(0.96);transform-origin:0 0;font-weight:bold;letter-spacing:0.1px;color:#111">########</div></div>
<div class="a" style="left:255.7px;top:471.0px;width:133.5px;height:9.2px;overflow:hidden"><div class="a" style="left:2.8px;top:1.2px;font-style:italic;font-size:7.6px;line-height:8px;white-space:nowrap;color:#151515;transform:scaleX(0.96);transform-origin:0 0">Replacement of Mop Head</div></div>
<div class="a" style="left:569.2px;top:471.0px;width:135.3px;height:9.2px;overflow:hidden"><div class="a" style="left:5.3px;top:1.2px;font-style:italic;font-size:7.6px;line-height:8px;white-space:nowrap;color:#151515;transform:scaleX(0.96);transform-origin:0 0">5pcs Mop Head @ Php93</div></div>
<div class="a" style="left:1157.0px;top:471.0px;width:49.6px;height:9.2px;overflow:hidden"><div class="a" style="left:3.0px;top:1.2px;font-style:italic;font-size:7.6px;line-height:8px;white-space:nowrap;color:#151515;transform:scaleX(0.96);transform-origin:0 0;letter-spacing:0.35px">27-Jan-23</div></div>
<div class="a" style="left:948.6px;top:471.0px;width:39.0px;height:9.2px;overflow:hidden"><div class="a" style="left:2.4px;top:1.2px;font-style:italic;font-size:7.6px;line-height:8px;white-space:nowrap;color:#151515;transform:scaleX(0.96);transform-origin:0 0">High</div></div>
<div class="a" style="left:987.6px;top:471.0px;width:49.7px;height:9.2px;overflow:hidden"><div class="a" style="left:2.9px;top:1.2px;font-style:italic;font-size:7.6px;line-height:8px;white-space:nowrap;color:#151515;transform:scaleX(0.96);transform-origin:0 0">ASAP</div></div>
<div class="a" style="left:1106.4px;top:471.0px;width:50.6px;height:9.2px;overflow:hidden"><div class="a" style="left:2.6px;top:1.2px;font-style:italic;font-size:7.6px;line-height:8px;white-space:nowrap;color:#151515;transform:scaleX(0.96);transform-origin:0 0">Approved</div></div>
<div class="a" style="left:1206.6px;top:471.0px;width:57.3px;height:9.2px;overflow:hidden"><div class="a" style="left:2.9px;top:1.2px;font-style:italic;font-size:7.6px;line-height:8px;white-space:nowrap;color:#151515;transform:scaleX(0.96);transform-origin:0 0">Cash expense</div></div>
<div class="a" style="left:1263.9px;top:471.0px;width:70.1px;height:9.2px;overflow:hidden"><div class="a" style="left:2.6px;top:1.2px;font-style:italic;font-size:7.6px;line-height:8px;white-space:nowrap;color:#151515;transform:scaleX(0.96);transform-origin:0 0">Completed</div></div>
<div class="a" style="left:20.0px;top:480.2px;width:19.5px;height:18.6px;overflow:hidden"><div class="a" style="left:4.5px;top:1.2px;font-style:italic;font-size:7.6px;line-height:8px;white-space:nowrap;color:#151515;transform:scaleX(0.96);transform-origin:0 0">24</div></div>
<div class="a" style="left:39.5px;top:480.2px;width:42.0px;height:18.6px;overflow:hidden"><div class="a" style="left:4.0px;top:1.2px;font-style:italic;font-size:7.6px;line-height:8px;white-space:nowrap;color:#151515;transform:scaleX(0.96);transform-origin:0 0;font-weight:bold;letter-spacing:0.1px;color:#111">########</div></div>
<div class="a" style="left:255.7px;top:480.2px;width:133.5px;height:18.6px;overflow:hidden"><div class="a" style="left:2.8px;top:1.2px;font-style:italic;font-size:7.6px;line-height:8px;white-space:nowrap;color:#151515;transform:scaleX(0.96);transform-origin:0 0">Cleaning of Drainage</div></div>
<div class="a" style="left:1157.0px;top:480.2px;width:49.6px;height:18.6px;overflow:hidden"><div class="a" style="left:3.0px;top:1.2px;font-style:italic;font-size:7.6px;line-height:8px;white-space:nowrap;color:#151515;transform:scaleX(0.96);transform-origin:0 0;letter-spacing:0.35px">28-Jan-23</div></div>
<div class="a" style="left:948.6px;top:480.2px;width:39.0px;height:18.6px;overflow:hidden"><div class="a" style="left:2.4px;top:1.2px;font-style:italic;font-size:7.6px;line-height:8px;white-space:nowrap;color:#151515;transform:scaleX(0.96);transform-origin:0 0">High</div></div>
<div class="a" style="left:987.6px;top:480.2px;width:49.7px;height:18.6px;overflow:hidden"><div class="a" style="left:2.9px;top:1.2px;font-style:italic;font-size:7.6px;line-height:8px;white-space:nowrap;color:#151515;transform:scaleX(0.96);transform-origin:0 0">ASAP</div></div>
<div class="a" style="left:1106.4px;top:480.2px;width:50.6px;height:18.6px;overflow:hidden"><div class="a" style="left:2.6px;top:1.2px;font-style:italic;font-size:7.6px;line-height:8px;white-space:nowrap;color:#151515;transform:scaleX(0.96);transform-origin:0 0">Approved</div></div>
<div class="a" style="left:1206.6px;top:480.2px;width:57.3px;height:18.6px;overflow:hidden"><div class="a" style="left:2.9px;top:1.2px;font-style:italic;font-size:7.6px;line-height:8px;white-space:nowrap;color:#151515;transform:scaleX(0.96);transform-origin:0 0">Cash expense</div></div>
<div class="a" style="left:1263.9px;top:480.2px;width:70.1px;height:18.6px;overflow:hidden"><div class="a" style="left:2.6px;top:1.2px;font-style:italic;font-size:7.6px;line-height:8px;white-space:nowrap;color:#151515;transform:scaleX(0.96);transform-origin:0 0">Completed</div></div>
<div class="a" style="left:20.0px;top:498.8px;width:19.5px;height:8.7px;overflow:hidden"><div class="a" style="left:4.5px;top:1.2px;font-style:italic;font-size:7.6px;line-height:8px;white-space:nowrap;color:#151515;transform:scaleX(0.96);transform-origin:0 0">25</div></div>
<div class="a" style="left:39.5px;top:498.8px;width:42.0px;height:8.7px;overflow:hidden"><div class="a" style="left:4.0px;top:1.2px;font-style:italic;font-size:7.6px;line-height:8px;white-space:nowrap;color:#151515;transform:scaleX(0.96);transform-origin:0 0;font-weight:bold;letter-spacing:0.1px;color:#111">########</div></div>
<div class="a" style="left:255.7px;top:498.8px;width:133.5px;height:8.7px;overflow:hidden"><div class="a" style="left:2.8px;top:1.2px;font-style:italic;font-size:7.6px;line-height:8px;white-space:nowrap;color:#151515;transform:scaleX(0.96);transform-origin:0 0">Cleaning of  Aircon</div></div>
<div class="a" style="left:948.6px;top:498.8px;width:39.0px;height:8.7px;overflow:hidden"><div class="a" style="left:2.4px;top:1.2px;font-style:italic;font-size:7.6px;line-height:8px;white-space:nowrap;color:#151515;transform:scaleX(0.96);transform-origin:0 0">Medium</div></div>
<div class="a" style="left:987.6px;top:498.8px;width:49.7px;height:8.7px;overflow:hidden"><div class="a" style="left:2.9px;top:1.2px;font-style:italic;font-size:7.6px;line-height:8px;white-space:nowrap;color:#151515;transform:scaleX(0.96);transform-origin:0 0">February 4</div></div>
<div class="a" style="left:1157.0px;top:498.8px;width:49.6px;height:8.7px;overflow:hidden"><div class="a" style="left:3.0px;top:1.2px;font-style:italic;font-size:7.6px;line-height:8px;white-space:nowrap;color:#151515;transform:scaleX(0.96);transform-origin:0 0;letter-spacing:0.35px">28-Jan-23</div></div>
<div class="a" style="left:1106.4px;top:498.8px;width:50.6px;height:8.7px;overflow:hidden"><div class="a" style="left:2.6px;top:1.2px;font-style:italic;font-size:7.6px;line-height:8px;white-space:nowrap;color:#151515;transform:scaleX(0.96);transform-origin:0 0">Approved</div></div>
<div class="a" style="left:1206.6px;top:498.8px;width:57.3px;height:8.7px;overflow:hidden"><div class="a" style="left:2.9px;top:1.2px;font-style:italic;font-size:7.6px;line-height:8px;white-space:nowrap;color:#151515;transform:scaleX(0.96);transform-origin:0 0">Cash expense</div></div>
<div class="a" style="left:1263.9px;top:498.8px;width:70.1px;height:8.7px;overflow:hidden"><div class="a" style="left:2.6px;top:1.2px;font-style:italic;font-size:7.6px;line-height:8px;white-space:nowrap;color:#151515;transform:scaleX(0.96);transform-origin:0 0">Completed</div></div>
<div class="a" style="left:20.0px;top:507.5px;width:19.5px;height:9.2px;overflow:hidden"><div class="a" style="left:4.5px;top:1.2px;font-style:italic;font-size:7.6px;line-height:8px;white-space:nowrap;color:#151515;transform:scaleX(0.96);transform-origin:0 0">26</div></div>
<div class="a" style="left:39.5px;top:507.5px;width:42.0px;height:9.2px;overflow:hidden"><div class="a" style="left:4.0px;top:1.2px;font-style:italic;font-size:7.6px;line-height:8px;white-space:nowrap;color:#151515;transform:scaleX(0.96);transform-origin:0 0;font-weight:bold;letter-spacing:0.1px;color:#111">########</div></div>
<div class="a" style="left:255.7px;top:507.5px;width:133.5px;height:9.2px;overflow:hidden"><div class="a" style="left:2.8px;top:1.2px;font-style:italic;font-size:7.6px;line-height:8px;white-space:nowrap;color:#151515;transform:scaleX(0.96);transform-origin:0 0">Replacement of Broom</div></div>
<div class="a" style="left:389.2px;top:507.5px;width:180.0px;height:9.2px;overflow:hidden"><div class="a" style="left:2.8px;top:1.2px;font-style:italic;font-size:7.6px;line-height:8px;white-space:nowrap;color:#151515;transform:scaleX(0.96);transform-origin:0 0">Damaged Broom</div></div>
<div class="a" style="left:569.2px;top:507.5px;width:135.3px;height:9.2px;overflow:hidden"><div class="a" style="left:5.3px;top:1.2px;font-style:italic;font-size:7.6px;line-height:8px;white-space:nowrap;color:#151515;transform:scaleX(0.96);transform-origin:0 0">2pcs Broom @ Php105, 3pcs Broom @ P</div></div>
<div class="a" style="left:1157.0px;top:507.5px;width:49.6px;height:9.2px;overflow:hidden"><div class="a" style="left:3.0px;top:1.2px;font-style:italic;font-size:7.6px;line-height:8px;white-space:nowrap;color:#151515;transform:scaleX(0.96);transform-origin:0 0;letter-spacing:0.35px">30-Jan-23</div></div>
<div class="a" style="left:948.6px;top:507.5px;width:39.0px;height:9.2px;overflow:hidden"><div class="a" style="left:2.4px;top:1.2px;font-style:italic;font-size:7.6px;line-height:8px;white-space:nowrap;color:#151515;transform:scaleX(0.96);transform-origin:0 0">High</div></div>
<div class="a" style="left:987.6px;top:507.5px;width:49.7px;height:9.2px;overflow:hidden"><div class="a" style="left:2.9px;top:1.2px;font-style:italic;font-size:7.6px;line-height:8px;white-space:nowrap;color:#151515;transform:scaleX(0.96);transform-origin:0 0">ASAP</div></div>
<div class="a" style="left:1106.4px;top:507.5px;width:50.6px;height:9.2px;overflow:hidden"><div class="a" style="left:2.6px;top:1.2px;font-style:italic;font-size:7.6px;line-height:8px;white-space:nowrap;color:#151515;transform:scaleX(0.96);transform-origin:0 0">Approved</div></div>
<div class="a" style="left:1206.6px;top:507.5px;width:57.3px;height:9.2px;overflow:hidden"><div class="a" style="left:2.9px;top:1.2px;font-style:italic;font-size:7.6px;line-height:8px;white-space:nowrap;color:#151515;transform:scaleX(0.96);transform-origin:0 0">Cash expense</div></div>
<div class="a" style="left:1263.9px;top:507.5px;width:70.1px;height:9.2px;overflow:hidden"><div class="a" style="left:2.6px;top:1.2px;font-style:italic;font-size:7.6px;line-height:8px;white-space:nowrap;color:#151515;transform:scaleX(0.96);transform-origin:0 0">Completed</div></div>
<div class="a" style="left:20.0px;top:516.7px;width:19.5px;height:26.9px;overflow:hidden"><div class="a" style="left:4.5px;top:1.2px;font-style:italic;font-size:7.6px;line-height:8px;white-space:nowrap;color:#151515;transform:scaleX(0.96);transform-origin:0 0">27</div></div>
<div class="a" style="left:39.5px;top:516.7px;width:42.0px;height:26.9px;overflow:hidden"><div class="a" style="left:4.0px;top:1.2px;font-style:italic;font-size:7.6px;line-height:8px;white-space:nowrap;color:#151515;transform:scaleX(0.96);transform-origin:0 0;font-weight:bold;letter-spacing:0.1px;color:#111">########</div></div>
<div class="a" style="left:255.7px;top:516.7px;width:133.5px;height:26.9px;overflow:hidden"><div class="a" style="left:2.8px;top:1.2px;font-style:italic;font-size:7.6px;line-height:8px;white-space:nowrap;color:#151515;transform:scaleX(0.96);transform-origin:0 0">Replacement of Sauce container and</div></div>
<div class="a" style="left:255.7px;top:516.7px;width:133.5px;height:26.9px;overflow:hidden"><div class="a" style="left:2.8px;top:10.1px;font-style:italic;font-size:7.6px;line-height:8px;white-space:nowrap;color:#151515;transform:scaleX(0.96);transform-origin:0 0">Sharpening Stone for Cooks and Food</div></div>
<div class="a" style="left:255.7px;top:516.7px;width:133.5px;height:26.9px;overflow:hidden"><div class="a" style="left:2.8px;top:19.0px;font-style:italic;font-size:7.6px;line-height:8px;white-space:nowrap;color:#151515;transform:scaleX(0.96);transform-origin:0 0">Preparer</div></div>
<div class="a" style="left:569.2px;top:516.7px;width:135.3px;height:26.9px;overflow:hidden"><div class="a" style="left:5.3px;top:10.1px;font-style:italic;font-size:7.6px;line-height:8px;white-space:nowrap;color:#151515;transform:scaleX(0.96);transform-origin:0 0">2pcs Sauce Pan @ Php99, 2pcs</div></div>
<div class="a" style="left:569.2px;top:516.7px;width:135.3px;height:26.9px;overflow:hidden"><div class="a" style="left:5.3px;top:19.0px;font-style:italic;font-size:7.6px;line-height:8px;white-space:nowrap;color:#151515;transform:scaleX(0.96);transform-origin:0 0">Sharpening Stone @ Php65</div></div>
<div class="a" style="left:1157.0px;top:516.7px;width:49.6px;height:26.9px;overflow:hidden"><div class="a" style="left:3.0px;top:1.2px;font-style:italic;font-size:7.6px;line-height:8px;white-space:nowrap;color:#151515;transform:scaleX(0.96);transform-origin:0 0;letter-spacing:0.35px">30-Jan-23</div></div>
<div class="a" style="left:948.6px;top:516.7px;width:39.0px;height:26.9px;overflow:hidden"><div class="a" style="left:2.4px;top:1.2px;font-style:italic;font-size:7.6px;line-height:8px;white-space:nowrap;color:#151515;transform:scaleX(0.96);transform-origin:0 0">High</div></div>
<div class="a" style="left:987.6px;top:516.7px;width:49.7px;height:26.9px;overflow:hidden"><div class="a" style="left:2.9px;top:1.2px;font-style:italic;font-size:7.6px;line-height:8px;white-space:nowrap;color:#151515;transform:scaleX(0.96);transform-origin:0 0">ASAP</div></div>
<div class="a" style="left:1106.4px;top:516.7px;width:50.6px;height:26.9px;overflow:hidden"><div class="a" style="left:2.6px;top:1.2px;font-style:italic;font-size:7.6px;line-height:8px;white-space:nowrap;color:#151515;transform:scaleX(0.96);transform-origin:0 0">Approved</div></div>
<div class="a" style="left:1206.6px;top:516.7px;width:57.3px;height:26.9px;overflow:hidden"><div class="a" style="left:2.9px;top:1.2px;font-style:italic;font-size:7.6px;line-height:8px;white-space:nowrap;color:#151515;transform:scaleX(0.96);transform-origin:0 0">Cash expense</div></div>
<div class="a" style="left:1263.9px;top:516.7px;width:70.1px;height:26.9px;overflow:hidden"><div class="a" style="left:2.6px;top:1.2px;font-style:italic;font-size:7.6px;line-height:8px;white-space:nowrap;color:#151515;transform:scaleX(0.96);transform-origin:0 0">Completed</div></div>
<div class="a" style="left:20.0px;top:543.6px;width:19.5px;height:9.2px;overflow:hidden"><div class="a" style="left:4.5px;top:1.2px;font-style:italic;font-size:7.6px;line-height:8px;white-space:nowrap;color:#151515;transform:scaleX(0.96);transform-origin:0 0">28</div></div>
<div class="a" style="left:39.5px;top:543.6px;width:42.0px;height:9.2px;overflow:hidden"><div class="a" style="left:4.0px;top:1.2px;font-style:italic;font-size:7.6px;line-height:8px;white-space:nowrap;color:#151515;transform:scaleX(0.96);transform-origin:0 0;font-weight:bold;letter-spacing:0.1px;color:#111">########</div></div>
<div class="a" style="left:255.7px;top:543.6px;width:133.5px;height:9.2px;overflow:hidden"><div class="a" style="left:2.8px;top:1.2px;font-style:italic;font-size:7.6px;line-height:8px;white-space:nowrap;color:#151515;transform:scaleX(0.96);transform-origin:0 0">Purchase of Desk Tray for Files</div></div>
<div class="a" style="left:569.2px;top:543.6px;width:135.3px;height:9.2px;overflow:hidden"><div class="a" style="left:5.3px;top:1.2px;font-style:italic;font-size:7.6px;line-height:8px;white-space:nowrap;color:#151515;transform:scaleX(0.96);transform-origin:0 0">1pc Desk Tray @ Php420</div></div>
<div class="a" style="left:1157.0px;top:543.6px;width:49.6px;height:9.2px;overflow:hidden"><div class="a" style="left:3.0px;top:1.2px;font-style:italic;font-size:7.6px;line-height:8px;white-space:nowrap;color:#151515;transform:scaleX(0.96);transform-origin:0 0;letter-spacing:0.35px">30-Jan-23</div></div>
<div class="a" style="left:948.6px;top:543.6px;width:39.0px;height:9.2px;overflow:hidden"><div class="a" style="left:2.4px;top:1.2px;font-style:italic;font-size:7.6px;line-height:8px;white-space:nowrap;color:#151515;transform:scaleX(0.96);transform-origin:0 0">High</div></div>
<div class="a" style="left:987.6px;top:543.6px;width:49.7px;height:9.2px;overflow:hidden"><div class="a" style="left:2.9px;top:1.2px;font-style:italic;font-size:7.6px;line-height:8px;white-space:nowrap;color:#151515;transform:scaleX(0.96);transform-origin:0 0">ASAP</div></div>
<div class="a" style="left:1106.4px;top:543.6px;width:50.6px;height:9.2px;overflow:hidden"><div class="a" style="left:2.6px;top:1.2px;font-style:italic;font-size:7.6px;line-height:8px;white-space:nowrap;color:#151515;transform:scaleX(0.96);transform-origin:0 0">Approved</div></div>
<div class="a" style="left:1206.6px;top:543.6px;width:57.3px;height:9.2px;overflow:hidden"><div class="a" style="left:2.9px;top:1.2px;font-style:italic;font-size:7.6px;line-height:8px;white-space:nowrap;color:#151515;transform:scaleX(0.96);transform-origin:0 0">Cash expense</div></div>
<div class="a" style="left:1263.9px;top:543.6px;width:70.1px;height:9.2px;overflow:hidden"><div class="a" style="left:2.6px;top:1.2px;font-style:italic;font-size:7.6px;line-height:8px;white-space:nowrap;color:#151515;transform:scaleX(0.96);transform-origin:0 0">Completed</div></div>
<div class="a" style="left:20.0px;top:552.8px;width:19.5px;height:9.1px;overflow:hidden"><div class="a" style="left:4.5px;top:1.2px;font-style:italic;font-size:7.6px;line-height:8px;white-space:nowrap;color:#151515;transform:scaleX(0.96);transform-origin:0 0">29</div></div>
<div class="a" style="left:39.5px;top:552.8px;width:42.0px;height:9.1px;overflow:hidden"><div class="a" style="left:4.0px;top:1.2px;font-style:italic;font-size:7.6px;line-height:8px;white-space:nowrap;color:#151515;transform:scaleX(0.96);transform-origin:0 0;letter-spacing:0.35px">31-Jan-23</div></div>
<div class="a" style="left:255.7px;top:552.8px;width:133.5px;height:9.1px;overflow:hidden"><div class="a" style="left:2.8px;top:1.2px;font-style:italic;font-size:7.6px;line-height:8px;white-space:nowrap;color:#151515;transform:scaleX(0.96);transform-origin:0 0">Cleaning of Drainage</div></div>
<div class="a" style="left:1157.0px;top:552.8px;width:49.6px;height:9.1px;overflow:hidden"><div class="a" style="left:3.0px;top:1.2px;font-style:italic;font-size:7.6px;line-height:8px;white-space:nowrap;color:#151515;transform:scaleX(0.96);transform-origin:0 0;letter-spacing:0.35px">31-Jan-23</div></div>
<div class="a" style="left:948.6px;top:552.8px;width:39.0px;height:9.1px;overflow:hidden"><div class="a" style="left:2.4px;top:1.2px;font-style:italic;font-size:7.6px;line-height:8px;white-space:nowrap;color:#151515;transform:scaleX(0.96);transform-origin:0 0">High</div></div>
<div class="a" style="left:987.6px;top:552.8px;width:49.7px;height:9.1px;overflow:hidden"><div class="a" style="left:2.9px;top:1.2px;font-style:italic;font-size:7.6px;line-height:8px;white-space:nowrap;color:#151515;transform:scaleX(0.96);transform-origin:0 0">ASAP</div></div>
<div class="a" style="left:1106.4px;top:552.8px;width:50.6px;height:9.1px;overflow:hidden"><div class="a" style="left:2.6px;top:1.2px;font-style:italic;font-size:7.6px;line-height:8px;white-space:nowrap;color:#151515;transform:scaleX(0.96);transform-origin:0 0">Approved</div></div>
<div class="a" style="left:1206.6px;top:552.8px;width:57.3px;height:9.1px;overflow:hidden"><div class="a" style="left:2.9px;top:1.2px;font-style:italic;font-size:7.6px;line-height:8px;white-space:nowrap;color:#151515;transform:scaleX(0.96);transform-origin:0 0">Cash expense</div></div>
<div class="a" style="left:1263.9px;top:552.8px;width:70.1px;height:9.1px;overflow:hidden"><div class="a" style="left:2.6px;top:1.2px;font-style:italic;font-size:7.6px;line-height:8px;white-space:nowrap;color:#151515;transform:scaleX(0.96);transform-origin:0 0">Completed</div></div>
<div class="a" style="left:20.0px;top:561.9px;width:19.5px;height:9.1px;overflow:hidden"><div class="a" style="left:4.5px;top:1.2px;font-style:italic;font-size:7.6px;line-height:8px;white-space:nowrap;color:#151515;transform:scaleX(0.96);transform-origin:0 0">30</div></div>
<div class="a" style="left:39.5px;top:561.9px;width:42.0px;height:9.1px;overflow:hidden"><div class="a" style="left:4.0px;top:1.2px;font-style:italic;font-size:7.6px;line-height:8px;white-space:nowrap;color:#151515;transform:scaleX(0.96);transform-origin:0 0;letter-spacing:0.35px">31-Jan-23</div></div>
<div class="a" style="left:255.7px;top:561.9px;width:133.5px;height:9.1px;overflow:hidden"><div class="a" style="left:2.8px;top:1.2px;font-style:italic;font-size:7.6px;line-height:8px;white-space:nowrap;color:#151515;transform:scaleX(0.96);transform-origin:0 0">Purchase of Phenolic Board for</div></div>
<div class="a" style="left:569.2px;top:561.9px;width:135.3px;height:9.1px;overflow:hidden"><div class="a" style="left:5.3px;top:1.2px;font-style:italic;font-size:7.6px;line-height:8px;white-space:nowrap;color:#151515;transform:scaleX(0.96);transform-origin:0 0">4pcs Phenolic Board 3/4 @ Php1050</div></div>
<div class="a" style="left:1157.0px;top:561.9px;width:49.6px;height:9.1px;overflow:hidden"><div class="a" style="left:3.0px;top:1.2px;font-style:italic;font-size:7.6px;line-height:8px;white-space:nowrap;color:#151515;transform:scaleX(0.96);transform-origin:0 0;letter-spacing:0.35px">31-Jan-23</div></div>
<div class="a" style="left:948.6px;top:561.9px;width:39.0px;height:9.1px;overflow:hidden"><div class="a" style="left:2.4px;top:1.2px;font-style:italic;font-size:7.6px;line-height:8px;white-space:nowrap;color:#151515;transform:scaleX(0.96);transform-origin:0 0">High</div></div>
<div class="a" style="left:987.6px;top:561.9px;width:49.7px;height:9.1px;overflow:hidden"><div class="a" style="left:2.9px;top:1.2px;font-style:italic;font-size:7.6px;line-height:8px;white-space:nowrap;color:#151515;transform:scaleX(0.96);transform-origin:0 0">ASAP</div></div>
<div class="a" style="left:1106.4px;top:561.9px;width:50.6px;height:9.1px;overflow:hidden"><div class="a" style="left:2.6px;top:1.2px;font-style:italic;font-size:7.6px;line-height:8px;white-space:nowrap;color:#151515;transform:scaleX(0.96);transform-origin:0 0">Approved</div></div>
<div class="a" style="left:1206.6px;top:561.9px;width:57.3px;height:9.1px;overflow:hidden"><div class="a" style="left:2.9px;top:1.2px;font-style:italic;font-size:7.6px;line-height:8px;white-space:nowrap;color:#151515;transform:scaleX(0.96);transform-origin:0 0">Cash expense</div></div>
<div class="a" style="left:1263.9px;top:561.9px;width:70.1px;height:9.1px;overflow:hidden"><div class="a" style="left:2.6px;top:1.2px;font-style:italic;font-size:7.6px;line-height:8px;white-space:nowrap;color:#151515;transform:scaleX(0.96);transform-origin:0 0">Completed</div></div>
<div class="a" style="left:20.0px;top:571.0px;width:19.5px;height:18.3px;overflow:hidden"><div class="a" style="left:4.5px;top:1.2px;font-style:italic;font-size:7.6px;line-height:8px;white-space:nowrap;color:#151515;transform:scaleX(0.96);transform-origin:0 0">31</div></div>
<div class="a" style="left:39.5px;top:571.0px;width:42.0px;height:18.3px;overflow:hidden"><div class="a" style="left:4.0px;top:1.2px;font-style:italic;font-size:7.6px;line-height:8px;white-space:nowrap;color:#151515;transform:scaleX(0.96);transform-origin:0 0;letter-spacing:0.35px">31-Jan-23</div></div>
<div class="a" style="left:255.7px;top:571.0px;width:133.5px;height:18.3px;overflow:hidden"><div class="a" style="left:2.8px;top:1.2px;font-style:italic;font-size:7.6px;line-height:8px;white-space:nowrap;color:#151515;transform:scaleX(0.96);transform-origin:0 0">Purchase of Clear Book and Refill</div></div>
<div class="a" style="left:569.2px;top:571.0px;width:135.3px;height:18.3px;overflow:hidden"><div class="a" style="left:5.3px;top:1.2px;font-style:italic;font-size:7.6px;line-height:8px;white-space:nowrap;color:#151515;transform:scaleX(0.96);transform-origin:0 0">3pcs Clear book @ Php50, Clear book</div></div>
<div class="a" style="left:569.2px;top:571.0px;width:135.3px;height:18.3px;overflow:hidden"><div class="a" style="left:5.3px;top:10.1px;font-style:italic;font-size:7.6px;line-height:8px;white-space:nowrap;color:#151515;transform:scaleX(0.96);transform-origin:0 0">refill @ Php25</div></div>
<div class="a" style="left:1157.0px;top:571.0px;width:49.6px;height:18.3px;overflow:hidden"><div class="a" style="left:3.0px;top:1.2px;font-style:italic;font-size:7.6px;line-height:8px;white-space:nowrap;color:#151515;transform:scaleX(0.96);transform-origin:0 0;letter-spacing:0.35px">31-Jan-23</div></div>
<div class="a" style="left:948.6px;top:571.0px;width:39.0px;height:18.3px;overflow:hidden"><div class="a" style="left:2.4px;top:1.2px;font-style:italic;font-size:7.6px;line-height:8px;white-space:nowrap;color:#151515;transform:scaleX(0.96);transform-origin:0 0">High</div></div>
<div class="a" style="left:987.6px;top:571.0px;width:49.7px;height:18.3px;overflow:hidden"><div class="a" style="left:2.9px;top:1.2px;font-style:italic;font-size:7.6px;line-height:8px;white-space:nowrap;color:#151515;transform:scaleX(0.96);transform-origin:0 0">ASAP</div></div>
<div class="a" style="left:1106.4px;top:571.0px;width:50.6px;height:18.3px;overflow:hidden"><div class="a" style="left:2.6px;top:1.2px;font-style:italic;font-size:7.6px;line-height:8px;white-space:nowrap;color:#151515;transform:scaleX(0.96);transform-origin:0 0">Approved</div></div>
<div class="a" style="left:1206.6px;top:571.0px;width:57.3px;height:18.3px;overflow:hidden"><div class="a" style="left:2.9px;top:1.2px;font-style:italic;font-size:7.6px;line-height:8px;white-space:nowrap;color:#151515;transform:scaleX(0.96);transform-origin:0 0">Cash expense</div></div>
<div class="a" style="left:1263.9px;top:571.0px;width:70.1px;height:18.3px;overflow:hidden"><div class="a" style="left:2.6px;top:1.2px;font-style:italic;font-size:7.6px;line-height:8px;white-space:nowrap;color:#151515;transform:scaleX(0.96);transform-origin:0 0">Completed</div></div>
<div class="a" style="left:20.0px;top:589.3px;width:19.5px;height:9.2px;overflow:hidden"><div class="a" style="left:4.5px;top:1.2px;font-style:italic;font-size:7.6px;line-height:8px;white-space:nowrap;color:#151515;transform:scaleX(0.96);transform-origin:0 0">32</div></div>
<div class="a" style="left:39.5px;top:589.3px;width:42.0px;height:9.2px;overflow:hidden"><div class="a" style="left:4.0px;top:1.2px;font-style:italic;font-size:7.6px;line-height:8px;white-space:nowrap;color:#151515;transform:scaleX(0.96);transform-origin:0 0;letter-spacing:0.35px">1-Feb-23</div></div>
<div class="a" style="left:255.7px;top:589.3px;width:133.5px;height:9.2px;overflow:hidden"><div class="a" style="left:2.8px;top:1.2px;font-style:italic;font-size:7.6px;line-height:8px;white-space:nowrap;color:#151515;transform:scaleX(0.96);transform-origin:0 0">Purchase of Rack for Storage Products</div></div>
<div class="a" style="left:569.2px;top:589.3px;width:135.3px;height:9.2px;overflow:hidden"><div class="a" style="left:5.3px;top:1.2px;font-style:italic;font-size:7.6px;line-height:8px;white-space:nowrap;color:#151515;transform:scaleX(0.96);transform-origin:0 0">2pcs Boltless Rack 150cm @ Php3039</div></div>
<div class="a" style="left:1157.0px;top:589.3px;width:49.6px;height:9.2px;overflow:hidden"><div class="a" style="left:3.0px;top:1.2px;font-style:italic;font-size:7.6px;line-height:8px;white-space:nowrap;color:#151515;transform:scaleX(0.96);transform-origin:0 0;letter-spacing:0.35px">1-Feb-23</div></div>
<div class="a" style="left:948.6px;top:589.3px;width:39.0px;height:9.2px;overflow:hidden"><div class="a" style="left:2.4px;top:1.2px;font-style:italic;font-size:7.6px;line-height:8px;white-space:nowrap;color:#151515;transform:scaleX(0.96);transform-origin:0 0">High</div></div>
<div class="a" style="left:987.6px;top:589.3px;width:49.7px;height:9.2px;overflow:hidden"><div class="a" style="left:2.9px;top:1.2px;font-style:italic;font-size:7.6px;line-height:8px;white-space:nowrap;color:#151515;transform:scaleX(0.96);transform-origin:0 0">ASAP</div></div>
<div class="a" style="left:1106.4px;top:589.3px;width:50.6px;height:9.2px;overflow:hidden"><div class="a" style="left:2.6px;top:1.2px;font-style:italic;font-size:7.6px;line-height:8px;white-space:nowrap;color:#151515;transform:scaleX(0.96);transform-origin:0 0">Approved</div></div>
<div class="a" style="left:1206.6px;top:589.3px;width:57.3px;height:9.2px;overflow:hidden"><div class="a" style="left:2.9px;top:1.2px;font-style:italic;font-size:7.6px;line-height:8px;white-space:nowrap;color:#151515;transform:scaleX(0.96);transform-origin:0 0">Cash expense</div></div>
<div class="a" style="left:1263.9px;top:589.3px;width:70.1px;height:9.2px;overflow:hidden"><div class="a" style="left:2.6px;top:1.2px;font-style:italic;font-size:7.6px;line-height:8px;white-space:nowrap;color:#151515;transform:scaleX(0.96);transform-origin:0 0">Completed</div></div>
<div class="a" style="left:20.0px;top:598.5px;width:19.5px;height:8.7px;overflow:hidden"><div class="a" style="left:4.5px;top:1.2px;font-style:italic;font-size:7.6px;line-height:8px;white-space:nowrap;color:#151515;transform:scaleX(0.96);transform-origin:0 0">33</div></div>
<div class="a" style="left:39.5px;top:598.5px;width:42.0px;height:8.7px;overflow:hidden"><div class="a" style="left:4.0px;top:1.2px;font-style:italic;font-size:7.6px;line-height:8px;white-space:nowrap;color:#151515;transform:scaleX(0.96);transform-origin:0 0;letter-spacing:0.35px">1-Feb-23</div></div>
<div class="a" style="left:255.7px;top:598.5px;width:133.5px;height:8.7px;overflow:hidden"><div class="a" style="left:2.8px;top:1.2px;font-style:italic;font-size:7.6px;line-height:8px;white-space:nowrap;color:#151515;transform:scaleX(0.96);transform-origin:0 0">Purchase of Pot Holder for Cooks</div></div>
<div class="a" style="left:569.2px;top:598.5px;width:135.3px;height:8.7px;overflow:hidden"><div class="a" style="left:5.3px;top:1.2px;font-style:italic;font-size:7.6px;line-height:8px;white-space:nowrap;color:#151515;transform:scaleX(0.96);transform-origin:0 0">1dozen Pot Holder @ Php120</div></div>
<div class="a" style="left:1157.0px;top:598.5px;width:49.6px;height:8.7px;overflow:hidden"><div class="a" style="left:3.0px;top:1.2px;font-style:italic;font-size:7.6px;line-height:8px;white-space:nowrap;color:#151515;transform:scaleX(0.96);transform-origin:0 0;letter-spacing:0.35px">1-Feb-23</div></div>
<div class="a" style="left:948.6px;top:598.5px;width:39.0px;height:8.7px;overflow:hidden"><div class="a" style="left:2.4px;top:1.2px;font-style:italic;font-size:7.6px;line-height:8px;white-space:nowrap;color:#151515;transform:scaleX(0.96);transform-origin:0 0">High</div></div>
<div class="a" style="left:987.6px;top:598.5px;width:49.7px;height:8.7px;overflow:hidden"><div class="a" style="left:2.9px;top:1.2px;font-style:italic;font-size:7.6px;line-height:8px;white-space:nowrap;color:#151515;transform:scaleX(0.96);transform-origin:0 0">ASAP</div></div>
<div class="a" style="left:1106.4px;top:598.5px;width:50.6px;height:8.7px;overflow:hidden"><div class="a" style="left:2.6px;top:1.2px;font-style:italic;font-size:7.6px;line-height:8px;white-space:nowrap;color:#151515;transform:scaleX(0.96);transform-origin:0 0">Approved</div></div>
<div class="a" style="left:1206.6px;top:598.5px;width:57.3px;height:8.7px;overflow:hidden"><div class="a" style="left:2.9px;top:1.2px;font-style:italic;font-size:7.6px;line-height:8px;white-space:nowrap;color:#151515;transform:scaleX(0.96);transform-origin:0 0">Cash expense</div></div>
<div class="a" style="left:1263.9px;top:598.5px;width:70.1px;height:8.7px;overflow:hidden"><div class="a" style="left:2.6px;top:1.2px;font-style:italic;font-size:7.6px;line-height:8px;white-space:nowrap;color:#151515;transform:scaleX(0.96);transform-origin:0 0">Completed</div></div>
<div class="a" style="left:20.0px;top:607.2px;width:19.5px;height:12.8px;overflow:hidden"><div class="a" style="left:4.5px;top:1.2px;font-style:italic;font-size:7.6px;line-height:8px;white-space:nowrap;color:#151515;transform:scaleX(0.96);transform-origin:0 0">34</div></div>
<div class="a" style="left:39.5px;top:607.2px;width:42.0px;height:12.8px;overflow:hidden"><div class="a" style="left:4.0px;top:1.2px;font-style:italic;font-size:7.6px;line-height:8px;white-space:nowrap;color:#151515;transform:scaleX(0.96);transform-origin:0 0;letter-spacing:0.35px">4-Feb-23</div></div>
<div class="a" style="left:255.7px;top:607.2px;width:133.5px;height:12.8px;overflow:hidden"><div class="a" style="left:2.8px;top:1.2px;font-style:italic;font-size:7.6px;line-height:8px;white-space:nowrap;color:#151515;transform:scaleX(0.96);transform-origin:0 0">Cleaning of Drainage</div></div>
<div class="a" style="left:1157.0px;top:607.2px;width:49.6px;height:12.8px;overflow:hidden"><div class="a" style="left:3.0px;top:1.2px;font-style:italic;font-size:7.6px;line-height:8px;white-space:nowrap;color:#151515;transform:scaleX(0.96);transform-origin:0 0;letter-spacing:0.35px">4-Feb-23</div></div>
<div class="a" style="left:948.6px;top:607.2px;width:39.0px;height:12.8px;overflow:hidden"><div class="a" style="left:2.4px;top:1.2px;font-style:italic;font-size:7.6px;line-height:8px;white-space:nowrap;color:#151515;transform:scaleX(0.96);transform-origin:0 0">High</div></div>
<div class="a" style="left:987.6px;top:607.2px;width:49.7px;height:12.8px;overflow:hidden"><div class="a" style="left:2.9px;top:1.2px;font-style:italic;font-size:7.6px;line-height:8px;white-space:nowrap;color:#151515;transform:scaleX(0.96);transform-origin:0 0">ASAP</div></div>
<div class="a" style="left:1106.4px;top:607.2px;width:50.6px;height:12.8px;overflow:hidden"><div class="a" style="left:2.6px;top:1.2px;font-style:italic;font-size:7.6px;line-height:8px;white-space:nowrap;color:#151515;transform:scaleX(0.96);transform-origin:0 0">Approved</div></div>
<div class="a" style="left:1206.6px;top:607.2px;width:57.3px;height:12.8px;overflow:hidden"><div class="a" style="left:2.9px;top:1.2px;font-style:italic;font-size:7.6px;line-height:8px;white-space:nowrap;color:#151515;transform:scaleX(0.96);transform-origin:0 0">Cash expense</div></div>
<div class="a" style="left:1263.9px;top:607.2px;width:70.1px;height:12.8px;overflow:hidden"><div class="a" style="left:2.6px;top:1.2px;font-style:italic;font-size:7.6px;line-height:8px;white-space:nowrap;color:#151515;transform:scaleX(0.96);transform-origin:0 0">Completed</div></div>
<div class="a" style="left:20px;top:163px;width:1304.5px;height:1px;background:#2e2e2e"></div>
<div class="a" style="left:20px;top:164px;width:1304.5px;height:1px;background:#c4c4c4"></div>
<div class="a" style="left:20px;top:198px;width:1304.5px;height:1px;background:#2e2e2e"></div>
<div class="a" style="left:20px;top:199px;width:1304.5px;height:1px;background:#c4c4c4"></div>
<div class="a" style="left:20px;top:207px;width:1304.5px;height:2px;background:#8e8e8e"></div>
<div class="a" style="left:20px;top:216px;width:1304.5px;height:2px;background:#8e8e8e"></div>
<div class="a" style="left:20px;top:234px;width:1304.5px;height:1px;background:#2e2e2e"></div>
<div class="a" style="left:20px;top:235px;width:1304.5px;height:1px;background:#c4c4c4"></div>
<div class="a" style="left:20px;top:244px;width:1304.5px;height:1px;background:#2e2e2e"></div>
<div class="a" style="left:20px;top:245px;width:1304.5px;height:1px;background:#c4c4c4"></div>
<div class="a" style="left:20px;top:253px;width:1304.5px;height:1px;background:#2e2e2e"></div>
<div class="a" style="left:20px;top:254px;width:1304.5px;height:1px;background:#c4c4c4"></div>
<div class="a" style="left:20px;top:262px;width:1304.5px;height:1px;background:#2e2e2e"></div>
<div class="a" style="left:20px;top:263px;width:1304.5px;height:1px;background:#c4c4c4"></div>
<div class="a" style="left:20px;top:280px;width:1304.5px;height:1px;background:#2e2e2e"></div>
<div class="a" style="left:20px;top:281px;width:1304.5px;height:1px;background:#c4c4c4"></div>
<div class="a" style="left:20px;top:289px;width:1304.5px;height:1px;background:#2e2e2e"></div>
<div class="a" style="left:20px;top:290px;width:1304.5px;height:1px;background:#c4c4c4"></div>
<div class="a" style="left:20px;top:298px;width:1304.5px;height:2px;background:#8e8e8e"></div>
<div class="a" style="left:20px;top:307px;width:1304.5px;height:2px;background:#8e8e8e"></div>
<div class="a" style="left:20px;top:316px;width:1304.5px;height:2px;background:#8e8e8e"></div>
<div class="a" style="left:20px;top:325px;width:1304.5px;height:2px;background:#8e8e8e"></div>
<div class="a" style="left:20px;top:352px;width:1304.5px;height:1px;background:#2e2e2e"></div>
<div class="a" style="left:20px;top:353px;width:1304.5px;height:1px;background:#c4c4c4"></div>
<div class="a" style="left:20px;top:370px;width:1304.5px;height:1px;background:#2e2e2e"></div>
<div class="a" style="left:20px;top:371px;width:1304.5px;height:1px;background:#c4c4c4"></div>
<div class="a" style="left:20px;top:389px;width:1304.5px;height:1px;background:#2e2e2e"></div>
<div class="a" style="left:20px;top:390px;width:1304.5px;height:1px;background:#c4c4c4"></div>
<div class="a" style="left:20px;top:398px;width:1304.5px;height:1px;background:#2e2e2e"></div>
<div class="a" style="left:20px;top:399px;width:1304.5px;height:1px;background:#c4c4c4"></div>
<div class="a" style="left:20px;top:407px;width:1304.5px;height:1px;background:#2e2e2e"></div>
<div class="a" style="left:20px;top:408px;width:1304.5px;height:1px;background:#c4c4c4"></div>
<div class="a" style="left:20px;top:434px;width:1304.5px;height:1px;background:#2e2e2e"></div>
<div class="a" style="left:20px;top:435px;width:1304.5px;height:1px;background:#c4c4c4"></div>
<div class="a" style="left:20px;top:443px;width:1304.5px;height:2px;background:#8e8e8e"></div>
<div class="a" style="left:20px;top:452px;width:1304.5px;height:2px;background:#8e8e8e"></div>
<div class="a" style="left:20px;top:461px;width:1304.5px;height:2px;background:#8e8e8e"></div>
<div class="a" style="left:20px;top:470px;width:1304.5px;height:2px;background:#8e8e8e"></div>
<div class="a" style="left:20px;top:480px;width:1304.5px;height:1px;background:#2e2e2e"></div>
<div class="a" style="left:20px;top:481px;width:1304.5px;height:1px;background:#c4c4c4"></div>
<div class="a" style="left:20px;top:498px;width:1304.5px;height:1px;background:#2e2e2e"></div>
<div class="a" style="left:20px;top:499px;width:1304.5px;height:1px;background:#c4c4c4"></div>
<div class="a" style="left:20px;top:507px;width:1304.5px;height:1px;background:#2e2e2e"></div>
<div class="a" style="left:20px;top:508px;width:1304.5px;height:1px;background:#c4c4c4"></div>
<div class="a" style="left:20px;top:516px;width:1304.5px;height:1px;background:#2e2e2e"></div>
<div class="a" style="left:20px;top:517px;width:1304.5px;height:1px;background:#c4c4c4"></div>
<div class="a" style="left:20px;top:543px;width:1304.5px;height:1px;background:#2e2e2e"></div>
<div class="a" style="left:20px;top:544px;width:1304.5px;height:1px;background:#c4c4c4"></div>
<div class="a" style="left:20px;top:552px;width:1304.5px;height:2px;background:#8e8e8e"></div>
<div class="a" style="left:20px;top:561px;width:1304.5px;height:2px;background:#8e8e8e"></div>
<div class="a" style="left:20px;top:570px;width:1304.5px;height:2px;background:#8e8e8e"></div>
<div class="a" style="left:20px;top:589px;width:1304.5px;height:1px;background:#2e2e2e"></div>
<div class="a" style="left:20px;top:590px;width:1304.5px;height:1px;background:#c4c4c4"></div>
<div class="a" style="left:20px;top:598px;width:1304.5px;height:1px;background:#2e2e2e"></div>
<div class="a" style="left:20px;top:599px;width:1304.5px;height:1px;background:#c4c4c4"></div>
<div class="a" style="left:20px;top:607px;width:1304.5px;height:1px;background:#2e2e2e"></div>
<div class="a" style="left:20px;top:608px;width:1304.5px;height:1px;background:#c4c4c4"></div>
<div class="a" style="left:39.0px;top:163.3px;width:1px;height:449.5px;background:#2a2a2a"></div>
<div class="a" style="left:81.0px;top:163.3px;width:1px;height:449.5px;background:#2a2a2a"></div>
<div class="a" style="left:155.1px;top:163.3px;width:1px;height:449.5px;background:#2a2a2a"></div>
<div class="a" style="left:196.2px;top:163.3px;width:1px;height:449.5px;background:#2a2a2a"></div>
<div class="a" style="left:255.2px;top:163.3px;width:1px;height:449.5px;background:#2a2a2a"></div>
<div class="a" style="left:388.7px;top:163.3px;width:1px;height:449.5px;background:#2a2a2a"></div>
<div class="a" style="left:568.7px;top:163.3px;width:1px;height:449.5px;background:#2a2a2a"></div>
<div class="a" style="left:704.0px;top:163.3px;width:1px;height:449.5px;background:#2a2a2a"></div>
<div class="a" style="left:763.0px;top:163.3px;width:1px;height:449.5px;background:#2a2a2a"></div>
<div class="a" style="left:813.0px;top:163.3px;width:1px;height:449.5px;background:#2a2a2a"></div>
<div class="a" style="left:862.0px;top:163.3px;width:1px;height:449.5px;background:#2a2a2a"></div>
<div class="a" style="left:948.1px;top:163.3px;width:1px;height:449.5px;background:#2a2a2a"></div>
<div class="a" style="left:987.1px;top:163.3px;width:1px;height:449.5px;background:#2a2a2a"></div>
<div class="a" style="left:1036.8px;top:163.3px;width:1px;height:449.5px;background:#2a2a2a"></div>
<div class="a" style="left:1105.9px;top:163.3px;width:1px;height:449.5px;background:#2a2a2a"></div>
<div class="a" style="left:1156.5px;top:163.3px;width:1px;height:449.5px;background:#2a2a2a"></div>
<div class="a" style="left:1206.1px;top:163.3px;width:1px;height:449.5px;background:#2a2a2a"></div>
<div class="a" style="left:1263.4px;top:163.3px;width:1px;height:449.5px;background:#2a2a2a"></div>
<div class="fb" style="left:22.0px;top:180.7px"></div>
<div class="fb" style="left:64.0px;top:180.7px"></div>
<div class="fb" style="left:138.1px;top:180.7px"></div>
<div class="fb" style="left:179.2px;top:180.7px"></div>
<div class="fb" style="left:238.2px;top:180.7px"></div>
<div class="fb" style="left:371.7px;top:180.7px"></div>
<div class="fb" style="left:551.7px;top:180.7px"></div>
<div class="fb" style="left:687.0px;top:180.7px"></div>
<div class="fb" style="left:746.0px;top:180.7px"></div>
<div class="fb" style="left:796.0px;top:180.7px"></div>
<div class="fb" style="left:845.0px;top:180.7px"></div>
<div class="fb" style="left:931.1px;top:180.7px"></div>
<div class="fb" style="left:970.1px;top:180.7px"></div>
<div class="fb" style="left:1019.8px;top:180.7px"></div>
<div class="fb" style="left:1088.9px;top:180.7px"></div>
<div class="fb" style="left:1139.5px;top:180.7px"></div>
<div class="fb" style="left:1189.1px;top:180.7px"></div>
<div class="fb" style="left:1246.4px;top:180.7px"></div>
<div class="fb" style="left:1316.5px;top:180.7px"></div>
</div>
<div class="a" style="left:81.6px;top:198.6px;width:174.4px;height:416.4px;background:#4472c4;border:2.2px solid #172c51"></div>
<div style="position:absolute;left:118.5px;top:388.34px;line-height:normal;white-space:nowrap;font-size:18.3px;color:#fff;transform:scaleX(1.0563);transform-origin:0 0;">Confidential</div>
<div class="a" style="left:705.1px;top:198.6px;width:243.1px;height:416.4px;background:#4472c4;border:2.2px solid #172c51"></div>
<div style="position:absolute;left:775px;top:387.34px;line-height:normal;white-space:nowrap;font-size:18.3px;color:#fff;transform:scaleX(1.0563);transform-origin:0 0;">Confidential</div>
<div class="a" style="left:19.6px;top:117.6px;width:20.4px;height:12.8px;border:1.6px solid #1e7145"></div>
<div class="a" style="left:37.4px;top:127.6px;width:4.6px;height:4.6px;background:#1e7145;border-left:1px solid #fff;border-top:1px solid #fff"></div>
<div class="a" style="left:1326.3px;top:110.4px;width:17.7px;height:503px;background:#f7f7f7;border-radius:9px"></div>
<svg class="a" style="left:1330px;top:115px" width="11" height="8"><path d="M5.5 0.5 L10.5 7.5 H0.5Z" fill="#6e6e6e"/></svg>
<div class="a" style="left:1331.2px;top:127.7px;width:8.7px;height:20px;background:#6e6e6e;border-radius:4.5px"></div>
<svg class="a" style="left:1330px;top:601.5px" width="11" height="8"><path d="M0.5 0.5 H10.5 L5.5 7.5Z" fill="#6e6e6e"/></svg>
<svg class="a" style="left:28px;top:622px" width="8" height="12"><path d="M6.5 1 L1.5 6 L6.5 11" fill="none" stroke="#8a8a8a" stroke-width="1.2"/></svg>
<svg class="a" style="left:62px;top:622px" width="8" height="12"><path d="M1.5 1 L6.5 6 L1.5 11" fill="none" stroke="#8a8a8a" stroke-width="1.2"/></svg>
<div class="a" style="left:121px;top:615.5px;width:77px;height:26.5px;background:#fff;border-radius:0 0 6px 6px;box-shadow:0 1px 1px rgba(0,0,0,0.08)"></div>
<div style="position:absolute;left:129px;top:619.75px;line-height:normal;white-space:nowrap;font-size:14.2px;color:#1f1f1f;transform:scaleX(0.9879);transform-origin:0 0;">2023 JOs</div>
<div class="a" style="left:129px;top:636.5px;width:60px;height:2px;background:#107c41;border-radius:1px"></div>
<div class="a" style="left:202px;top:620px;width:1px;height:17px;background:#c8c8c8"></div>
<div style="position:absolute;left:217px;top:622.75px;line-height:normal;white-space:nowrap;font-size:14.2px;color:#262626;transform:scaleX(1.0225);transform-origin:0 0;">Approval Guide</div>
<div class="a" style="left:332.5px;top:620px;width:1px;height:17px;background:#c8c8c8"></div>
<svg class="a" style="left:375px;top:621px" width="13" height="13"><path d="M6.5 0.5 V12.5 M0.5 6.5 H12.5" stroke="#8a8a8a" stroke-width="1.1"/></svg>
<div class="a" style="left:811.5px;top:623.5px;width:2.6px;height:2.6px;border-radius:2px;background:#444"></div>
<div class="a" style="left:811.5px;top:628px;width:2.6px;height:2.6px;border-radius:2px;background:#444"></div>
<div class="a" style="left:811.5px;top:632.5px;width:2.6px;height:2.6px;border-radius:2px;background:#444"></div>
<div class="a" style="left:829.7px;top:620.4px;width:497px;height:17px;background:#f7f7f7;border-radius:9px"></div>
<svg class="a" style="left:835px;top:624px" width="8" height="10"><path d="M7.5 0.5 V9.5 L0.5 5Z" fill="#6e6e6e"/></svg>
<div class="a" style="left:847.4px;top:624.6px;width:341.4px;height:8.6px;background:#6e6e6e;border-radius:4.5px"></div>
<svg class="a" style="left:1313.5px;top:624px" width="8" height="10"><path d="M0.5 0.5 V9.5 L7.5 5Z" fill="#6e6e6e"/></svg>
<div class="a" style="left:5px;top:645.8px;width:1341px;height:23.5px;background:#f5f5f5"></div>
<div style="position:absolute;left:16.7px;top:652.21px;line-height:normal;white-space:nowrap;font-size:10.6px;color:#333;transform:scaleX(0.9535);transform-origin:0 0;">Ready</div>
<svg class="a" style="left:65px;top:649px" width="18" height="18" viewBox="0 0 18 18"><circle cx="8.2" cy="3.3" r="1.9" fill="none" stroke="#333" stroke-width="1.1"/><path d="M1.6 4.6 C3.5 6.8 5.5 7.3 6.4 7.6 L5.2 15 C5 16.2 6.2 16.6 6.7 15.6 L8.6 11.2 M14.8 4.6 C12.9 6.8 10.9 7.3 10 7.6 L9.8 9.2" fill="none" stroke="#333" stroke-width="1.1" stroke-linecap="round"/><path d="M10.2 10.8 L15.8 16.4 M15.8 10.8 L10.2 16.4" stroke="#333" stroke-width="1.1"/></svg>
<div class="a" style="left:1035px;top:645.8px;width:41px;height:23.5px;background:#dcdcdc"></div>
<svg class="a" style="left:1047.5px;top:650px" width="15" height="15" viewBox="0 0 15 15"><rect x="0.5" y="0.5" width="14" height="14" rx="1" fill="#3a3a3a"/><g fill="#fff"><rect x="2" y="2" width="2.8" height="2.8"/><rect x="6.1" y="2" width="2.8" height="2.8"/><rect x="10.2" y="2" width="2.8" height="2.8"/><rect x="2" y="6.1" width="2.8" height="2.8"/><rect x="6.1" y="6.1" width="2.8" height="2.8"/><rect x="10.2" y="6.1" width="2.8" height="2.8"/><rect x="2" y="10.2" width="2.8" height="2.8"/><rect x="6.1" y="10.2" width="2.8" height="2.8"/><rect x="10.2" y="10.2" width="2.8" height="2.8"/></g></svg>
<svg class="a" style="left:1089.5px;top:650px" width="16" height="15" viewBox="0 0 16 15"><rect x="0.8" y="0.8" width="14" height="13.4" rx="1" fill="none" stroke="#333" stroke-width="1.5"/><rect x="3.5" y="3.2" width="8.6" height="8.6" fill="none" stroke="#333" stroke-width="1.2"/><path d="M5.5 5.3H10.2 M5.5 7.5H10.2 M5.5 9.7H10.2" stroke="#333" stroke-width="1"/></svg>
<svg class="a" style="left:1132px;top:650px" width="15" height="15" viewBox="0 0 15 15"><rect x="0.7" y="0.7" width="13.6" height="13.6" fill="none" stroke="#c2c2c2" stroke-width="1.2"/><path d="M3 0.7V8.2 M8.2 0.7V8.2 H0.7" fill="none" stroke="#c2c2c2" stroke-width="1.2"/></svg>
<div class="a" style="left:1166px;top:657px;width:8px;height:1.2px;background:#555"></div>
<div class="a" style="left:1180px;top:657px;width:103px;height:1.5px;background:#666"></div>
<div class="a" style="left:1230.5px;top:654px;width:1.2px;height:7px;background:#666"></div>
<div class="a" style="left:1199px;top:652px;width:5px;height:11px;background:#555;border-radius:1px"></div>
<svg class="a" style="left:1288px;top:653px" width="10" height="10"><path d="M5 0.5V9.5M0.5 5H9.5" stroke="#444" stroke-width="1"/></svg>
<div style="position:absolute;left:1309.8px;top:652.41px;line-height:normal;white-space:nowrap;font-size:10.6px;color:#333;transform:scaleX(0.9999);transform-origin:0 0;">45%</div>
<div class="a" style="left:5px;top:669.4px;width:1341px;height:41.3px;background:#d5d5d5"></div>
<svg class="a" style="left:21.5px;top:681.5px" width="18" height="17" viewBox="0 0 18 17"><path d="M0.3 2.5 L7.4 1.5 V7.9 H0.3Z M8.4 1.4 L17.4 0.2 V7.9 H8.4Z M0.3 8.9 H7.4 V15.3 L0.3 14.3Z M8.4 8.9 H17.4 V16.8 L8.4 15.5Z" fill="#000"/></svg>
<div class="a" style="left:55.8px;top:670.2px;width:300px;height:39.8px;background:#fff;border:1px solid #c8c8c8;border-bottom:none"></div>
<svg class="a" style="left:66px;top:680px" width="20" height="20" viewBox="0 0 20 20"><circle cx="12.7" cy="7" r="5.3" fill="none" stroke="#1a1a1a" stroke-width="1.2"/><path d="M8.9 10.8 L2 17.8" stroke="#1a1a1a" stroke-width="1.3"/></svg>
<div style="position:absolute;left:97.8px;top:683.08px;line-height:normal;white-space:nowrap;font-size:15.6px;color:#262626;transform:scaleX(0.9911);transform-origin:0 0;">Type here to search</div>
<svg class="a" style="left:275px;top:670.5px" width="79" height="40" viewBox="0 0 79 40">
<defs><linearGradient id="sky" x1="0" y1="0" x2="0" y2="1"><stop offset="0" stop-color="#6f8fdc"/><stop offset="0.6" stop-color="#8fd0e6"/><stop offset="1" stop-color="#6fd6d2"/></linearGradient>
<linearGradient id="sand" x1="0" y1="0" x2="0" y2="1"><stop offset="0" stop-color="#e6b54a"/><stop offset="1" stop-color="#f3c862"/></linearGradient></defs>
<path d="M8 8 C10 3 20 3 26 3 C32 0 42 0 48 2 C56 2 62 1 66 4 C72 6 71 11 74 14 C78 18 78 24 76 30 L6 30 C0 24 1 16 6 13 C4 11 6 9 8 8Z" fill="url(#sky)"/>
<ellipse cx="40" cy="8" rx="9" ry="3" fill="#eef6f4"/><ellipse cx="22" cy="12" rx="7" ry="2.3" fill="#eef6f4"/><ellipse cx="10" cy="17" rx="4.5" ry="1.6" fill="#eef6f4"/><ellipse cx="62" cy="14" rx="6" ry="1.8" fill="#eef6f4"/>
<circle cx="33" cy="18" r="3.5" fill="#f5d67a"/>
<path d="M16 28 L29 18 L36 19.5 L48 10.5 L64 27Z" fill="#2f5a8f"/>
<path d="M36 19.5 L48 10.5 L56 19 L46 22Z" fill="#5d8fbd"/>
<path d="M5 33 L21 22 L33 27 L45 22 L57 19 L73 32Z" fill="#3f8c6a"/>
<path d="M1 32 C8 31 15 24 23 24 C31 25 37 30 42 34 L42 40 L10 40 C6 37 3 34 1 32Z" fill="url(#sand)"/>
<path d="M40 33 C48 27 56 24 65 26 C70 28 74 31 78 32 L70 37 L60 40 L42 40Z" fill="url(#sand)"/>
<path d="M37 40 C35 35 38 31 42 28 L45 28.5 C43 31 42 35 45 40Z" fill="#f6eed4"/>
</svg>
<svg class="a" style="left:372px;top:680.5px" width="20" height="18" viewBox="0 0 20 18"><path d="M1 1.5H13 M1 16.5H13 M3 4.5H11V13.5H3Z M17 1V17 M15 9H19" fill="none" stroke="#222" stroke-width="1.2"/></svg>
<svg class="a" style="left:423px;top:677px" width="26" height="26" viewBox="0 0 26 26">
<defs><linearGradient id="eg" x1="0.1" y1="0.1" x2="1" y2="0.6"><stop offset="0" stop-color="#2fb6ef"/><stop offset="0.55" stop-color="#2ac7c6"/><stop offset="1" stop-color="#62e04e"/></linearGradient>
<linearGradient id="eb" x1="0" y1="0" x2="0.6" y2="1"><stop offset="0" stop-color="#2a8ee0"/><stop offset="1" stop-color="#1a5fb8"/></linearGradient></defs>
<circle cx="13" cy="13" r="12.6" fill="url(#eg)"/>
<path d="M0.5 13.5 C1 8 6 6.5 10.5 7 C14 7.4 16.5 9.5 17 12 L25.4 17.2 C24 22.5 19 25.6 13 25.6 C6 25.6 0.5 20 0.5 13.5Z" fill="url(#eb)"/>
<path d="M7.5 15.5 C7.5 10.5 12 8.5 15 10 C12 10.5 10.5 13 11.5 16.5 C12.5 20.5 17 22.5 21.5 20.5 C23 19.8 24 19 24.6 18.3 C22.8 22.8 18.5 25.6 13.5 25.6 C10 25.6 7.5 21 7.5 15.5Z" fill="#1b4f9c"/>
<ellipse cx="14" cy="13.2" rx="3.6" ry="3.4" fill="#dedede"/>
<path d="M15.5 14.8 C18 17 21.5 17.6 24.3 16.4 L24.8 18.8 C21.5 20.6 17.5 19.8 14.5 16.5Z" fill="#dedede"/>
</svg>
<div class="a" style="left:415.5px;top:708.8px;width:41.5px;height:2px;background:#0b6fd6"></div>
<svg class="a" style="left:476.5px;top:679px" width="24" height="22" viewBox="0 0 24 22"><path d="M1 3 H9 L11 5 H23 V20 H1Z" fill="#e8a820"/><path d="M1 6 H23 V20 H1Z" fill="#fcd462"/><path d="M6 12 H18 V20 H15 V15 H9 V20 H6Z" fill="#3b8fe0"/></svg>
<div class="a" style="left:467.5px;top:708.8px;width:42px;height:2px;background:#0b6fd6"></div>
<svg class="a" style="left:527.5px;top:677.5px" width="25" height="25" viewBox="0 0 25 25"><path d="M8 6 C8 1.5 17 1.5 17 6" fill="none" stroke="#2aa2e8" stroke-width="1.6"/><rect x="1" y="5" width="23" height="19" rx="2.5" fill="#0f3d7a"/><rect x="7.5" y="9.5" width="4.5" height="4.5" fill="#f25022"/><rect x="13" y="9.5" width="4.5" height="4.5" fill="#7fba00"/><rect x="7.5" y="15" width="4.5" height="4.5" fill="#00a4ef"/><rect x="13" y="15" width="4.5" height="4.5" fill="#ffb900"/></svg>
<svg class="a" style="left:579.5px;top:678px" width="27" height="23" viewBox="0 0 27 23"><path d="M1 8.5 L13.5 1 L26 8.5 V21.5 H1Z" fill="#3b3b3b"/><path d="M26 8 L15 12.8 L26 19" fill="none" stroke="#e8e8e8" stroke-width="1.4" stroke-linejoin="miter"/></svg>
<svg class="a" style="left:632.5px;top:677.5px" width="26" height="26" viewBox="0 0 26 26">
<path d="M13 13 L24.3 6.5 A13 13 0 0 0 1.7 6.5Z" fill="#ea4335"/>
<path d="M13 13 L1.7 6.5 A13 13 0 0 0 13 26Z" fill="#34a853"/>
<path d="M13 13 L13 26 A13 13 0 0 0 24.3 6.5Z" fill="#fbbc04"/>
<circle cx="13" cy="13" r="6" fill="#fff"/><circle cx="13" cy="13" r="4.8" fill="#1a73e8"/></svg>
<div class="a" style="left:624px;top:708.8px;width:42.8px;height:2px;background:#0b6fd6"></div>
<svg class="a" style="left:685px;top:678.7px" width="25" height="23" viewBox="0 0 25 23"><rect x="7" y="0" width="18" height="23" rx="1.5" fill="#0a5fc0"/><rect x="13" y="3" width="12" height="9" fill="#1b8de0"/><rect x="19" y="3" width="6" height="5" fill="#4cc8f5"/><rect x="13" y="3" width="6" height="5" fill="#2aa8ee"/><path d="M7 11.5 L25 11.5 V22 C25 22.6 24.6 23 24 23 H8 C7.4 23 7 22.6 7 22Z" fill="#1592e3"/><path d="M7 23 L25 11.5 V22 C25 22.6 24.6 23 24 23Z" fill="#34adf0"/><rect x="0" y="5.2" width="13" height="12.6" rx="1.5" fill="#0f6cc4"/><ellipse cx="6.5" cy="11.5" rx="3.1" ry="3.6" fill="none" stroke="#fff" stroke-width="1.9"/></svg>
<div class="a" style="left:724.7px;top:669.4px;width:46.4px;height:41.3px;background:#ececec"></div>
<svg class="a" style="left:737px;top:678.3px" width="23" height="23" viewBox="0 0 23 23"><rect x="4.5" y="0" width="18.5" height="23" rx="2.5" fill="#1f7d34"/><path d="M7 0 H14 V11.5 H4.5 V2.5 C4.5 1 5.5 0 7 0Z" fill="#5ecb5c"/><path d="M14 0 H20.5 C22 0 23 1 23 2.5 V11.5 H14Z" fill="#8fe27c"/><path d="M4.5 11.5 H14 V23 H7 C5.5 23 4.5 22 4.5 20.5Z" fill="#2e9a45"/><rect x="0" y="10.4" width="11" height="10.2" rx="2" fill="#0e6a36"/><path d="M3 12.8 L8 18.2 M8 12.8 L3 18.2" stroke="#fff" stroke-width="1.6"/></svg>
<div class="a" style="left:724.5px;top:708.8px;width:51.5px;height:2px;background:#0b6fd6"></div>
<div class="a" style="left:771.5px;top:669.4px;width:1px;height:41.3px;background:#bdbdbd"></div>
<div class="a" style="left:817.5px;top:679.7px;width:50.5px;height:21.3px;background:linear-gradient(#109a44,#057a2e 60%,#06682a);border:1px solid #2a2a2a;border-radius:1.5px"></div>
<div class="a" style="left:863px;top:680.7px;width:4.5px;height:19.3px;background:#0a0a0a"></div>
<div class="a" style="left:868px;top:685px;width:2.5px;height:10.5px;background:#111"></div>
<div style="position:absolute;left:828.8px;top:683.33px;line-height:normal;white-space:nowrap;font-size:14px;color:#fff;transform:scaleX(1.0459);transform-origin:0 0;">4:09</div>
<svg class="a" style="left:897px;top:677px" width="28" height="26" viewBox="0 0 28 26"><path d="M4 12 C4 18 9 23 15 23 C18 23 20.5 22 22.5 20 C17 20.5 11.5 16 11.5 10 C11.5 8 12 6.5 13 5 C8 5.5 4 8.5 4 12Z" fill="#f39c1f"/><path d="M2 10 C0.5 10 0.5 7 2.5 7 C2.5 4.5 5.5 3.5 7 5 C8 3 11.5 3.5 11.5 6.5 C13 6.5 13.5 10 11.5 10Z" fill="#d8e5f6" stroke="#b9cbe3" stroke-width="0.5"/><path d="M13 23 C11 23 11 19.5 13.5 19.5 C13.5 16.5 17 15.5 19 17.5 C20 15.5 24 16 24 19.5 C26 19.5 26.5 23 24 23Z" fill="#d3e2f5" stroke="#b5c8e2" stroke-width="0.5"/><circle cx="20.5" cy="6" r="5" fill="#d42a2a"/><text x="20.5" y="9" font-size="8" font-family="Liberation Sans" fill="#fff" text-anchor="middle" font-weight="bold">1</text></svg>
<div style="position:absolute;left:931.6px;top:683.88px;line-height:normal;white-space:nowrap;font-size:14.5px;color:#1f1f1f;transform:scaleX(0.9319);transform-origin:0 0;">28°C</div>
<svg class="a" style="left:992px;top:686px" width="15" height="9"><path d="M1 8 L7.5 1.5 L14 8" fill="none" stroke="#222" stroke-width="1.3"/></svg>
<svg class="a" style="left:1026.5px;top:681px" width="16" height="18" viewBox="0 0 16 18"><path d="M3 2 C1 4 1 14 3 16 M11.5 2 C13.5 4 13.5 14 11.5 16" fill="none" stroke="#333" stroke-width="1"/><rect x="3.5" y="6" width="7" height="6" rx="1" fill="none" stroke="#333" stroke-width="1.1"/><path d="M10.5 8 L14 6.5 V11.5 L10.5 10" fill="none" stroke="#333" stroke-width="1"/></svg>
<svg class="a" style="left:1057.5px;top:681px" width="19" height="17" viewBox="0 0 19 17"><path d="M3 12 C0.5 12 0.5 7.5 3.5 7.5 C4 4 9 3 11 6 C14 5 16 7.5 15 10" fill="none" stroke="#333" stroke-width="1.2"/><path d="M3 12 H9" stroke="#333" stroke-width="1.2"/><circle cx="13.5" cy="12" r="4.5" fill="#1a73d6"/><rect x="12.9" y="10.8" width="1.3" height="3.6" fill="#fff"/><rect x="12.9" y="8.8" width="1.3" height="1.3" fill="#fff"/></svg>
<svg class="a" style="left:1090px;top:681px" width="20" height="18" viewBox="0 0 20 18"><path d="M1.5 3 L16.5 1 V14 L1.5 15Z" fill="none" stroke="#333" stroke-width="1.1"/><path d="M6 8 C6 5 10 5 11 7 M11 9 C10.5 11.5 7 11.5 6 10" fill="none" stroke="#333" stroke-width="1"/><circle cx="15.5" cy="14" r="3.5" fill="#e81123"/></svg>
<svg class="a" style="left:1125px;top:684.5px" width="18" height="11" viewBox="0 0 18 11"><rect x="0.8" y="0.8" width="14.5" height="9.4" rx="1" fill="none" stroke="#111" stroke-width="1.2"/><rect x="2.2" y="2.2" width="11.8" height="6.6" fill="#111"/><rect x="15.6" y="3.5" width="1.8" height="4" fill="#111"/></svg>
<svg class="a" style="left:1160px;top:683px" width="16" height="15" viewBox="0 0 16 15"><path d="M1 14 C1 7 7 1 14 1 M4 14 C4 9 9 4 14 4 M7 14 C7 10.5 10.5 7 14 7" fill="none" stroke="#333" stroke-width="1.1"/><circle cx="13" cy="13" r="1.3" fill="#111"/></svg>
<svg class="a" style="left:1192px;top:683.5px" width="19" height="14" viewBox="0 0 19 14"><path d="M1 4.5 H4 L8 1 V13 L4 9.5 H1Z" fill="none" stroke="#333" stroke-width="1.1"/><path d="M11 4.5 C12 6 12 8 11 9.5 M13.5 3 C15.5 5.5 15.5 8.5 13.5 11 M16 1.5 C19 5 19 9 16 12.5" fill="none" stroke="#333" stroke-width="1.1"/></svg>
<div style="position:absolute;left:1230.6px;top:672.69px;line-height:normal;white-space:nowrap;font-size:13.6px;color:#1f1f1f;transform:scaleX(0.8909);transform-origin:0 0;">6:47 PM</div>
<div style="position:absolute;left:1221.8px;top:692.29px;line-height:normal;white-space:nowrap;font-size:13.6px;color:#1f1f1f;transform:scaleX(0.9578);transform-origin:0 0;">11/17/2025</div>
<svg class="a" style="left:1301px;top:680px" width="27" height="27" viewBox="0 0 27 27"><path d="M1 1 H18 V14 H9 L5 18 V14 H1Z" fill="#111"/><path d="M4 4.5H15 M4 7.5H15 M4 10.5H12" stroke="#d5d5d5" stroke-width="1.1"/><circle cx="18" cy="18" r="8.3" fill="#d5d5d5" stroke="#777" stroke-width="0.9"/><text x="18" y="22.3" font-size="12" font-weight="bold" font-family="Liberation Sans" fill="#111" text-anchor="middle">2</text></svg>
<div class="a" style="left:1340.5px;top:669.4px;width:1.8px;height:41.3px;background:#b0b0b0"></div>
</body></html>
